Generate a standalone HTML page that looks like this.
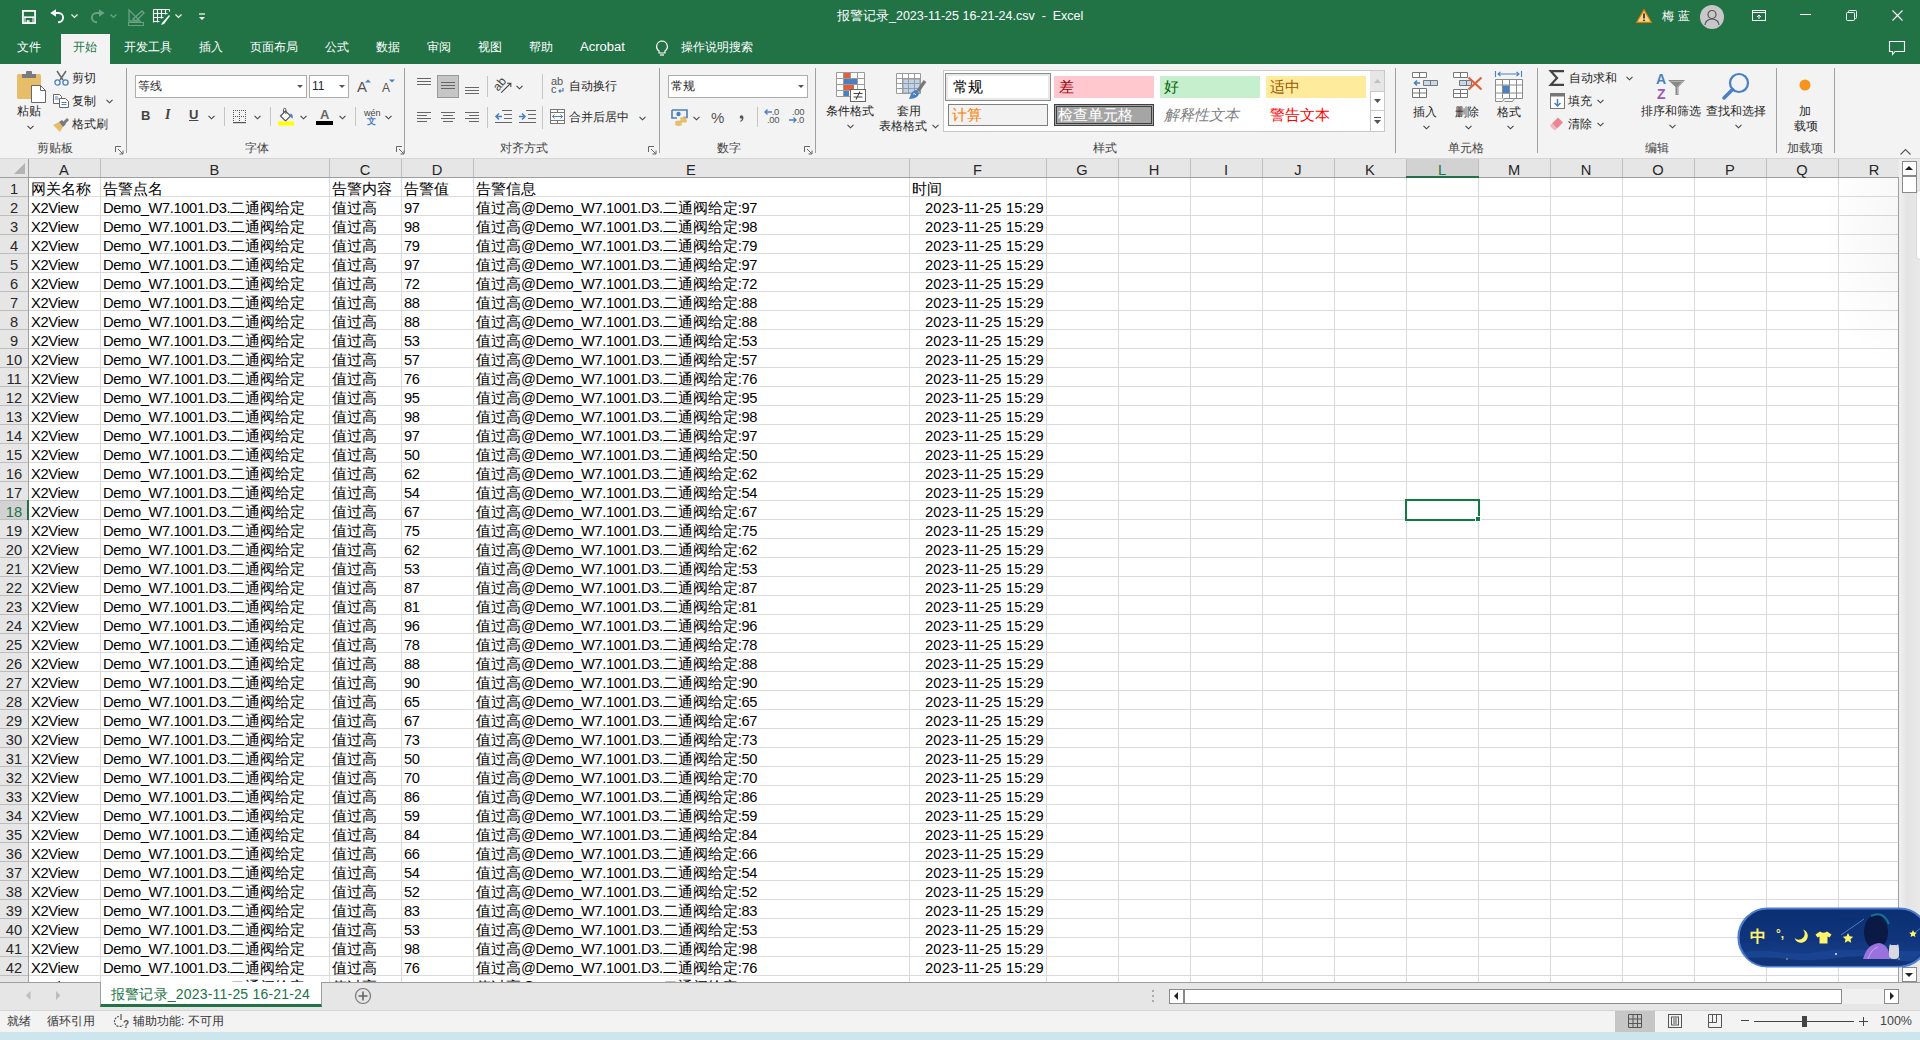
<!DOCTYPE html><html><head><meta charset="utf-8"><style>
*{box-sizing:border-box}
html,body{margin:0;padding:0}
body{width:1920px;height:1040px;overflow:hidden;position:relative;background:#fff;font-family:"Liberation Sans",sans-serif;color:#262626}
.a{position:absolute}
.t{position:absolute;white-space:pre;font-size:12px;line-height:14px}
svg{position:absolute;overflow:visible}
.vs{position:absolute;width:1px;background:#c6c6c6}
</style></head><body>

<div class="a" style="left:0;top:0;width:1920px;height:64px;background:#217346"></div>
<svg style="left:22px;top:10px" width="14" height="14" viewBox="0 0 14 14"><rect x="0.9" y="0.9" width="12.2" height="12.2" fill="none" stroke="#fff" stroke-width="1.8"/><path d="M2 7.2h10" stroke="#fff" stroke-width="1.6"/><path d="M3 8v5M11 8v5" stroke="#fff" stroke-width="1"/><path d="M5.3 13v-2.2h1.6V13" fill="none" stroke="#fff" stroke-width="1.2"/></svg>
<svg style="left:50px;top:9px" width="16" height="15" viewBox="0 0 16 15"><path d="M0.3 4L6 0.2v7.6z" fill="#fff"/><path d="M5 4h3.5a4.6 4.6 0 0 1 0 9.2H8" fill="none" stroke="#fff" stroke-width="1.9"/></svg>
<svg style="left:71px;top:14px" width="7" height="5"><path d="M0.5 0.5L3.5 3.5 6.5 0.5" fill="none" stroke="#fff" stroke-width="1.2"/></svg>
<svg style="left:89px;top:9px" width="16" height="15" viewBox="0 0 16 15"><path d="M15.7 4L10 0.2v7.6z" fill="#6aa383"/><path d="M11 4H7.5a4.6 4.6 0 0 0 0 9.2H8" fill="none" stroke="#6aa383" stroke-width="1.9"/></svg>
<svg style="left:110px;top:14px" width="7" height="5"><path d="M0.5 0.5L3.5 3.5 6.5 0.5" fill="none" stroke="#6aa383" stroke-width="1.2"/></svg>
<svg style="left:128px;top:9px" width="17" height="17" viewBox="0 0 17 17"><path d="M1 1v11h11z" fill="none" stroke="#6aa383" stroke-width="1.3"/><path d="M5 10L14 2l2 2-8 8z" fill="none" stroke="#6aa383" stroke-width="1.3"/><rect x="0.5" y="13.5" width="15" height="3" fill="none" stroke="#6aa383" stroke-width="1"/></svg>
<svg style="left:153px;top:9px" width="17" height="16" viewBox="0 0 17 16"><path d="M0.5 0.5h16M0.5 4.5h14M0.5 8.5h10M0.5 12.5h6M0.5 0.5v13M4.5 0.5v13M8.5 0.5v9M12.5 0.5v5M16.5 0.5v2" fill="none" stroke="#fff" stroke-width="1.1"/><path d="M9 14l7-8 1 1-6 8-3 1z" fill="#fff"/></svg>
<svg style="left:175px;top:14px" width="7" height="5"><path d="M0.5 0.5L3.5 3.5 6.5 0.5" fill="none" stroke="#fff" stroke-width="1.2"/></svg>
<svg style="left:199px;top:13px" width="6" height="8"><path d="M0 1h6" stroke="#fff" stroke-width="1.2"/><path d="M0 4h6L3 7z" fill="#fff"/></svg>
<div class="t" style="left:837px;top:9px;color:#fff;font-size:12.5px">报警记录_2023-11-25 16-21-24.csv  -  Excel</div>
<svg style="left:1636px;top:9px" width="16" height="14" viewBox="0 0 16 14"><path d="M8 0.8L15.3 13.3H0.7z" fill="#f7d38c" stroke="#e07b00" stroke-width="1.2"/><path d="M8 4.5v5" stroke="#222" stroke-width="1.6"/><circle cx="8" cy="11.3" r="0.9" fill="#222"/></svg>
<div class="t" style="left:1662px;top:9px;color:#fff;font-size:12px;letter-spacing:4px">梅蓝</div>
<svg style="left:1700px;top:5px" width="24" height="24" viewBox="0 0 24 24"><circle cx="12" cy="12" r="12" fill="#c8c8c8"/><circle cx="12" cy="9.5" r="4" fill="none" stroke="#555" stroke-width="1.2"/><path d="M5 20a7 6 0 0 1 14 0" fill="none" stroke="#555" stroke-width="1.2"/></svg>
<svg style="left:1752px;top:10px" width="14" height="11" viewBox="0 0 14 11"><rect x="0.5" y="0.5" width="13" height="10" fill="none" stroke="#fff" stroke-width="1"/><path d="M0.5 2.5h13" stroke="#fff"/><path d="M7 9V5M5 7l2-2 2 2" fill="none" stroke="#fff"/></svg>
<div class="a" style="left:1800px;top:14px;width:11px;height:1px;background:#fff"></div>
<svg style="left:1846px;top:10px" width="11" height="11" viewBox="0 0 11 11"><rect x="0.5" y="2.5" width="8" height="8" rx="1" fill="none" stroke="#fff"/><path d="M2.5 2.5v-1a1 1 0 0 1 1-1h6a1 1 0 0 1 1 1v6a1 1 0 0 1-1 1h-1" fill="none" stroke="#fff"/></svg>
<svg style="left:1892px;top:10px" width="11" height="11" viewBox="0 0 11 11"><path d="M0.5 0.5l10 10M10.5 0.5l-10 10" stroke="#fff" stroke-width="1.1"/></svg>
<div class="a" style="left:61px;top:34px;width:49px;height:30px;background:#f3f3f3"></div>
<div class="t" style="left:17px;top:40px;color:#fff">文件</div>
<div class="t" style="left:73px;top:40px;color:#217346">开始</div>
<div class="t" style="left:124px;top:40px;color:#fff">开发工具</div>
<div class="t" style="left:199px;top:40px;color:#fff">插入</div>
<div class="t" style="left:250px;top:40px;color:#fff">页面布局</div>
<div class="t" style="left:325px;top:40px;color:#fff">公式</div>
<div class="t" style="left:376px;top:40px;color:#fff">数据</div>
<div class="t" style="left:427px;top:40px;color:#fff">审阅</div>
<div class="t" style="left:478px;top:40px;color:#fff">视图</div>
<div class="t" style="left:529px;top:40px;color:#fff">帮助</div>
<div class="t" style="left:580px;top:40px;color:#fff"><span style="font-size:13px">Acrobat</span></div>
<div class="t" style="left:681px;top:40px;color:#fff">操作说明搜索</div>
<svg style="left:655px;top:40px" width="14" height="17" viewBox="0 0 14 17"><path d="M7 1a5.5 5.5 0 0 0-3 10v2h6v-2a5.5 5.5 0 0 0-3-10z" fill="none" stroke="#fff" stroke-width="1.2"/><path d="M5 15h4" stroke="#fff" stroke-width="1.2"/></svg>
<svg style="left:1889px;top:41px" width="16" height="15" viewBox="0 0 16 15"><path d="M0.5 0.5h15v10h-9.5l-2.5 3v-3h-3z" fill="none" stroke="#fff" stroke-width="1.1"/></svg>
<div class="a" style="left:0;top:64px;width:1920px;height:94px;background:#f3f3f3"></div>
<div class="a" style="left:0;top:158px;width:1920px;height:1px;background:#d5d5d5"></div>
<div class="vs" style="left:126px;top:68px;height:85px;background:#a0a0a0"></div>
<div class="vs" style="left:404px;top:68px;height:85px;background:#a0a0a0"></div>
<div class="vs" style="left:659px;top:68px;height:85px;background:#a0a0a0"></div>
<div class="vs" style="left:815px;top:68px;height:85px;background:#a0a0a0"></div>
<div class="vs" style="left:1395px;top:68px;height:85px;background:#a0a0a0"></div>
<div class="vs" style="left:1537px;top:68px;height:85px;background:#a0a0a0"></div>
<div class="vs" style="left:1776px;top:68px;height:85px;background:#a0a0a0"></div>
<div class="vs" style="left:1834px;top:68px;height:85px;background:#a0a0a0"></div>
<div class="t" style="left:37px;top:141px;color:#444">剪贴板</div>
<div class="t" style="left:245px;top:141px;color:#444">字体</div>
<div class="t" style="left:500px;top:141px;color:#444">对齐方式</div>
<div class="t" style="left:717px;top:141px;color:#444">数字</div>
<div class="t" style="left:1093px;top:141px;color:#444">样式</div>
<div class="t" style="left:1448px;top:141px;color:#444">单元格</div>
<div class="t" style="left:1645px;top:141px;color:#444">编辑</div>
<div class="t" style="left:1787px;top:141px;color:#444">加载项</div>
<svg style="left:115px;top:146px" width="9" height="9" viewBox="0 0 9 9"><path d="M0.5 6V0.5H6" fill="none" stroke="#666"/><path d="M3 3l5 5M8 4.5V8H4.5" fill="none" stroke="#666"/></svg>
<svg style="left:396px;top:146px" width="9" height="9" viewBox="0 0 9 9"><path d="M0.5 6V0.5H6" fill="none" stroke="#666"/><path d="M3 3l5 5M8 4.5V8H4.5" fill="none" stroke="#666"/></svg>
<svg style="left:648px;top:146px" width="9" height="9" viewBox="0 0 9 9"><path d="M0.5 6V0.5H6" fill="none" stroke="#666"/><path d="M3 3l5 5M8 4.5V8H4.5" fill="none" stroke="#666"/></svg>
<svg style="left:804px;top:146px" width="9" height="9" viewBox="0 0 9 9"><path d="M0.5 6V0.5H6" fill="none" stroke="#666"/><path d="M3 3l5 5M8 4.5V8H4.5" fill="none" stroke="#666"/></svg>
<svg style="left:17px;top:71px" width="30" height="32" viewBox="0 0 30 32"><rect x="0" y="3" width="24" height="25" rx="1.5" fill="#e8bd6a"/><rect x="5" y="3" width="14" height="4" fill="#7b7b7b"/><rect x="9" y="0" width="6" height="4" rx="1" fill="#7b7b7b"/><path d="M14.5 14.5h9l5 5v12h-14z" fill="#fff" stroke="#666"/><path d="M23.5 14.5v5h5" fill="none" stroke="#666"/></svg>
<div class="t" style="left:17px;top:104px;color:#262626">粘贴</div>
<svg style="left:27px;top:125px" width="7" height="5"><path d="M0.5 0.8L3.5 3.8 6.5 0.8" fill="none" stroke="#444" stroke-width="1.1"/></svg>
<svg style="left:54px;top:70px" width="15" height="16" viewBox="0 0 15 16"><path d="M3 1l6 9M12 1L6 10" stroke="#666" stroke-width="1.5"/><circle cx="3.5" cy="12.5" r="2.6" fill="none" stroke="#4a7fc1" stroke-width="1.3"/><circle cx="11.5" cy="12.5" r="2.6" fill="none" stroke="#4a7fc1" stroke-width="1.3"/></svg>
<div class="t" style="left:72px;top:71px">剪切</div>
<svg style="left:53px;top:94px" width="16" height="14" viewBox="0 0 16 14"><path d="M0.5 0.5h6l2 2v7h-8z" fill="#fff" stroke="#666"/><path d="M6.5 4.5h6l3 3v6h-9z" fill="#fff" stroke="#666"/><path d="M8.5 8.5h5M8.5 10.5h5M2 3h3M2 5h4" stroke="#4a7fc1"/></svg>
<div class="t" style="left:72px;top:94px">复制</div>
<svg style="left:106px;top:99px" width="7" height="5"><path d="M0.5 0.8L3.5 3.8 6.5 0.8" fill="none" stroke="#444" stroke-width="1.1"/></svg>
<svg style="left:53px;top:117px" width="17" height="15" viewBox="0 0 17 15"><path d="M0 8l6-3 4 5-3 5z" fill="#e8bd6a"/><path d="M6 5l4 5 3-3-4-4z" fill="#7b7b7b"/><path d="M10 5l4-4 2 2-4 4z" fill="#7b7b7b"/></svg>
<div class="t" style="left:72px;top:117px">格式刷</div>
<div class="a" style="left:135px;top:75px;width:172px;height:23px;background:#fff;border:1px solid #adadad"></div>
<div class="t" style="left:138px;top:79px">等线</div>
<svg style="left:297px;top:85px" width="7" height="4"><path d="M0 0h6L3 3z" fill="#555"/></svg>
<div class="a" style="left:309px;top:75px;width:40px;height:23px;background:#fff;border:1px solid #adadad"></div>
<div class="t" style="left:312px;top:79px">11</div>
<svg style="left:339px;top:85px" width="7" height="4"><path d="M0 0h6L3 3z" fill="#555"/></svg>
<div class="t" style="left:357px;top:80px;font-size:15px;color:#555">A</div><svg style="left:365px;top:79px" width="6" height="4"><path d="M0 3.5L3 0.5 6 3.5z" fill="#4a7fc1"/></svg>
<div class="t" style="left:382px;top:81px;font-size:12px;color:#555">A</div><svg style="left:389px;top:79px" width="6" height="4"><path d="M0 0.5h6L3 3.5z" fill="#4a7fc1"/></svg>
<div class="t" style="left:141px;top:109px;font-weight:bold;font-size:13px;color:#444">B</div>
<div class="t" style="left:165px;top:108px;font-style:italic;font-weight:bold;font-size:14px;color:#444;font-family:'Liberation Serif'">I</div>
<div class="t" style="left:189px;top:108px;font-size:13px;font-weight:bold;color:#444;text-decoration:underline">U</div>
<svg style="left:208px;top:115px" width="7" height="5"><path d="M0.5 0.8L3.5 3.8 6.5 0.8" fill="none" stroke="#444" stroke-width="1.1"/></svg>
<div class="vs" style="left:224px;top:107px;height:19px"></div>
<svg style="left:233px;top:110px" width="14" height="14" viewBox="0 0 14 14"><g fill="#555"><rect x="0" y="0" width="1" height="1"/><rect x="0" y="6" width="1" height="1"/><rect x="0" y="12" width="1" height="1"/><rect x="0" y="0" width="1" height="1"/><rect x="6" y="0" width="1" height="1"/><rect x="12" y="0" width="1" height="1"/><rect x="2" y="0" width="1" height="1"/><rect x="2" y="6" width="1" height="1"/><rect x="2" y="12" width="1" height="1"/><rect x="0" y="2" width="1" height="1"/><rect x="6" y="2" width="1" height="1"/><rect x="12" y="2" width="1" height="1"/><rect x="4" y="0" width="1" height="1"/><rect x="4" y="6" width="1" height="1"/><rect x="4" y="12" width="1" height="1"/><rect x="0" y="4" width="1" height="1"/><rect x="6" y="4" width="1" height="1"/><rect x="12" y="4" width="1" height="1"/><rect x="6" y="0" width="1" height="1"/><rect x="6" y="6" width="1" height="1"/><rect x="6" y="12" width="1" height="1"/><rect x="0" y="6" width="1" height="1"/><rect x="6" y="6" width="1" height="1"/><rect x="12" y="6" width="1" height="1"/><rect x="8" y="0" width="1" height="1"/><rect x="8" y="6" width="1" height="1"/><rect x="8" y="12" width="1" height="1"/><rect x="0" y="8" width="1" height="1"/><rect x="6" y="8" width="1" height="1"/><rect x="12" y="8" width="1" height="1"/><rect x="10" y="0" width="1" height="1"/><rect x="10" y="6" width="1" height="1"/><rect x="10" y="12" width="1" height="1"/><rect x="0" y="10" width="1" height="1"/><rect x="6" y="10" width="1" height="1"/><rect x="12" y="10" width="1" height="1"/><rect x="12" y="0" width="1" height="1"/><rect x="12" y="6" width="1" height="1"/><rect x="12" y="12" width="1" height="1"/><rect x="0" y="12" width="1" height="1"/><rect x="6" y="12" width="1" height="1"/><rect x="12" y="12" width="1" height="1"/></g><rect x="0" y="12" width="13" height="1.2" fill="#555"/></svg>
<svg style="left:254px;top:115px" width="7" height="5"><path d="M0.5 0.8L3.5 3.8 6.5 0.8" fill="none" stroke="#444" stroke-width="1.1"/></svg>
<div class="vs" style="left:270px;top:107px;height:19px"></div>
<svg style="left:278px;top:108px" width="18" height="18" viewBox="0 0 18 18"><path d="M2.5 8l5-5 5 5-5 5z" fill="#fff" stroke="#555" stroke-width="1.1"/><path d="M5.5 5V1.5a1.2 1.2 0 0 1 2.4 0V6" fill="none" stroke="#555" stroke-width="1"/><path d="M12.5 5.5q3 0.5 2 5.5-1.5-2-2.5-3z" fill="#4a7fc1"/><rect x="0" y="13.5" width="16" height="4" fill="#ffff00"/></svg>
<svg style="left:300px;top:115px" width="7" height="5"><path d="M0.5 0.8L3.5 3.8 6.5 0.8" fill="none" stroke="#444" stroke-width="1.1"/></svg>
<div class="t" style="left:320px;top:108px;font-size:13px;line-height:14px;font-weight:bold;color:#666">A</div><div class="a" style="left:316px;top:121px;width:17px;height:4px;background:#000"></div>
<svg style="left:339px;top:115px" width="7" height="5"><path d="M0.5 0.8L3.5 3.8 6.5 0.8" fill="none" stroke="#444" stroke-width="1.1"/></svg>
<div class="vs" style="left:355px;top:107px;height:19px"></div>
<div class="t" style="left:364px;top:109px;font-size:9px;line-height:9px;color:#444">wén</div><div class="t" style="left:367px;top:116px;font-size:9px;line-height:10px;font-weight:bold;color:#4a7fc1">文</div>
<svg style="left:385px;top:115px" width="7" height="5"><path d="M0.5 0.8L3.5 3.8 6.5 0.8" fill="none" stroke="#444" stroke-width="1.1"/></svg>
<div class="a" style="left:417px;top:78px;width:14px;height:1px;background:#666"></div><div class="a" style="left:417px;top:81px;width:14px;height:1px;background:#666"></div><div class="a" style="left:417px;top:84px;width:14px;height:1px;background:#666"></div>
<div class="a" style="left:437px;top:75px;width:22px;height:23px;background:#c6c6c6;border:1px solid #9a9a9a"></div>
<div class="a" style="left:441px;top:82px;width:14px;height:1px;background:#666"></div><div class="a" style="left:441px;top:85px;width:14px;height:1px;background:#666"></div><div class="a" style="left:441px;top:88px;width:14px;height:1px;background:#666"></div>
<div class="a" style="left:465px;top:87px;width:14px;height:1px;background:#666"></div><div class="a" style="left:465px;top:90px;width:14px;height:1px;background:#666"></div><div class="a" style="left:465px;top:93px;width:14px;height:1px;background:#666"></div>
<div class="vs" style="left:487px;top:76px;height:21px"></div>
<svg style="left:495px;top:77px" width="18" height="17" viewBox="0 0 18 17"><g transform="translate(4.3 6.8) rotate(-50)"><text x="0" y="4.3" text-anchor="middle" font-size="12" fill="#444" font-family="Liberation Sans">ab</text></g><path d="M6.2 15.7L15.3 6.7M12 6.2h3.8V10" fill="none" stroke="#444" stroke-width="1.1"/></svg>
<svg style="left:516px;top:85px" width="7" height="5"><path d="M0.5 0.8L3.5 3.8 6.5 0.8" fill="none" stroke="#444" stroke-width="1.1"/></svg>
<div class="vs" style="left:542px;top:74px;height:25px"></div>
<div class="t" style="left:551px;top:77px;font-size:11px;line-height:8px;color:#555">ab<br>c</div><svg style="left:558px;top:88px" width="6" height="5"><path d="M5 0v3H1M2.5 1.5L1 3l1.5 1.5" fill="none" stroke="#4a7fc1" stroke-width="1.2"/></svg>
<div class="t" style="left:569px;top:79px">自动换行</div>
<div class="a" style="left:417px;top:112px;width:14px;height:1px;background:#666"></div><div class="a" style="left:417px;top:115px;width:10px;height:1px;background:#666"></div><div class="a" style="left:417px;top:118px;width:14px;height:1px;background:#666"></div><div class="a" style="left:417px;top:121px;width:10px;height:1px;background:#666"></div>
<div class="a" style="left:441px;top:112px;width:14px;height:1px;background:#666"></div><div class="a" style="left:443px;top:115px;width:10px;height:1px;background:#666"></div><div class="a" style="left:441px;top:118px;width:14px;height:1px;background:#666"></div><div class="a" style="left:443px;top:121px;width:10px;height:1px;background:#666"></div>
<div class="a" style="left:465px;top:112px;width:14px;height:1px;background:#666"></div><div class="a" style="left:469px;top:115px;width:10px;height:1px;background:#666"></div><div class="a" style="left:465px;top:118px;width:14px;height:1px;background:#666"></div><div class="a" style="left:469px;top:121px;width:10px;height:1px;background:#666"></div>
<div class="vs" style="left:487px;top:107px;height:21px"></div>
<svg style="left:495px;top:110px" width="17" height="13" viewBox="0 0 17 13"><path d="M7 0.5h10M9 4.5h8M9 8.5h8M0 12.5h17" stroke="#666"/><path d="M1 6.5h6M4 3.5L1 6.5l3 3" fill="none" stroke="#4a7fc1" stroke-width="1.5"/></svg>
<svg style="left:519px;top:110px" width="17" height="13" viewBox="0 0 17 13"><path d="M7 0.5h10M9 4.5h8M9 8.5h8M0 12.5h17" stroke="#666"/><path d="M0 6.5h6M3 3.5l3 3-3 3" fill="none" stroke="#4a7fc1" stroke-width="1.5"/></svg>
<div class="vs" style="left:542px;top:106px;height:23px"></div>
<svg style="left:550px;top:109px" width="16" height="16" viewBox="0 0 16 16"><rect x="0.5" y="0.5" width="14" height="14" fill="#fff" stroke="#777"/><path d="M0.5 3.5h14M0.5 11.5h14M7.5 0.5v3M7.5 11.5v3" stroke="#777"/><path d="M2.5 7.5h10M4.5 5.5l-2 2 2 2M10.5 5.5l2 2-2 2" fill="none" stroke="#4a7fc1"/></svg>
<div class="t" style="left:569px;top:110px">合并后居中</div>
<svg style="left:639px;top:116px" width="7" height="5"><path d="M0.5 0.8L3.5 3.8 6.5 0.8" fill="none" stroke="#444" stroke-width="1.1"/></svg>
<div class="a" style="left:668px;top:75px;width:140px;height:23px;background:#fff;border:1px solid #adadad"></div>
<div class="t" style="left:671px;top:79px">常规</div>
<svg style="left:798px;top:85px" width="7" height="4"><path d="M0 0h6L3 3z" fill="#555"/></svg>
<svg style="left:671px;top:109px" width="17" height="17" viewBox="0 0 17 17"><path d="M1 1h15v7.5h-4M1 1v8h5" fill="none" stroke="#4a7fc1" stroke-width="1.6"/><circle cx="7.5" cy="5" r="2.2" fill="#4a7fc1"/><ellipse cx="12.5" cy="9.5" rx="3.5" ry="1.5" fill="#e8bd6a"/><ellipse cx="12.5" cy="12" rx="3.5" ry="1.5" fill="#e8bd6a"/><ellipse cx="7.5" cy="13" rx="3.5" ry="1.5" fill="#e8bd6a"/><ellipse cx="7.5" cy="15.5" rx="3.5" ry="1.4" fill="#e8bd6a"/></svg>
<svg style="left:693px;top:116px" width="7" height="5"><path d="M0.5 0.8L3.5 3.8 6.5 0.8" fill="none" stroke="#444" stroke-width="1.1"/></svg>
<div class="t" style="left:711px;top:110px;font-size:15px;line-height:15px;color:#555">%</div>
<svg style="left:739px;top:115px" width="5" height="7" viewBox="0 0 5 7"><circle cx="2.5" cy="2" r="1.8" fill="#555"/><path d="M4 2.5Q4 5 1.5 6.5" fill="none" stroke="#555" stroke-width="1.3"/></svg>
<div class="vs" style="left:757px;top:107px;height:20px"></div>
<div class="t" style="left:767px;top:108px;font-size:9.5px;line-height:8px;color:#555;letter-spacing:-0.3px">  .0<br>.00</div><svg style="left:764px;top:109px" width="8" height="6"><path d="M8 3H1M3.5 0.5L1 3l2.5 2.5" fill="none" stroke="#4a7fc1" stroke-width="1.3"/></svg>
<div class="t" style="left:792px;top:108px;font-size:9.5px;line-height:8px;color:#555;letter-spacing:-0.3px">.00<br>  .0</div><svg style="left:789px;top:117px" width="8" height="6"><path d="M0 3h7M4.5 0.5L7 3 4.5 5.5" fill="none" stroke="#4a7fc1" stroke-width="1.3"/></svg>
<svg style="left:836px;top:72px" width="31" height="31" viewBox="0 0 31 31"><path d="M0.5 0.5h28v24h-28zM0.5 6.5h28M0.5 12.5h28M0.5 18.5h28M7.5 0.5v24M14.5 0.5v24M21.5 0.5v24" fill="#fff" stroke="#9a9a9a"/><rect x="8" y="1" width="6" height="5" fill="#e0603a"/><rect x="8" y="7" width="13" height="5" fill="#4a7fc1"/><rect x="8" y="13" width="10" height="5" fill="#e0603a"/><rect x="8" y="19" width="5" height="5" fill="#4a7fc1"/><rect x="14.5" y="17.5" width="15" height="12" fill="#fff" stroke="#666"/><path d="M17.5 21.5h9M17.5 25h9M24 19.5l-4 8" fill="none" stroke="#444" stroke-width="1.1"/></svg>
<div class="t" style="left:826px;top:104px">条件格式</div>
<svg style="left:847px;top:124px" width="7" height="5"><path d="M0.5 0.8L3.5 3.8 6.5 0.8" fill="none" stroke="#444" stroke-width="1.1"/></svg>
<svg style="left:896px;top:73px" width="30" height="29" viewBox="0 0 30 29"><path d="M0.5 0.5h24v20h-24zM0.5 5.5h24M0.5 10.5h24M0.5 15.5h24M6.5 0.5v20M12.5 0.5v20M18.5 0.5v20" fill="#fff" stroke="#9a9a9a"/><rect x="7" y="6" width="17" height="14" fill="#bcd3ee"/><path d="M7 6h17v14H7z M7 10.5h17M7 15.5h17M12.5 6v14M18.5 6v14" fill="none" stroke="#9a9a9a"/><path d="M29 8l-7 10" stroke="#777" stroke-width="3.2"/><path d="M21 17q-4 0-6 4l-2 5q6 0 9-3 2-3-1-6z" fill="#4a7fc1"/><path d="M17 21q2-1 3 1" fill="none" stroke="#fff" stroke-width="0.8"/></svg>
<div class="t" style="left:897px;top:104px">套用</div>
<div class="t" style="left:879px;top:119px">表格格式</div>
<svg style="left:932px;top:124px" width="7" height="5"><path d="M0.5 0.8L3.5 3.8 6.5 0.8" fill="none" stroke="#444" stroke-width="1.1"/></svg>
<div class="a" style="left:943px;top:70px;width:442px;height:62px;background:#fff;border:1px solid #c8c8c8"></div>
<div class="a" style="left:945px;top:73px;width:106px;height:28px;border:1px solid #8a8a8a;background:#fff;box-shadow:inset 0 0 0 2px #e8e8e8"></div>
<div class="t" style="left:953px;top:79px;font-size:15px;line-height:16px;color:#000">常规</div>
<div class="a" style="left:1054px;top:76px;width:100px;height:22px;background:#ffc7ce"></div><div class="t" style="left:1059px;top:79px;font-size:15px;line-height:16px;color:#9c0006">差</div>
<div class="a" style="left:1160px;top:76px;width:100px;height:22px;background:#c6efce"></div><div class="t" style="left:1164px;top:79px;font-size:15px;line-height:16px;color:#006100">好</div>
<div class="a" style="left:1266px;top:76px;width:100px;height:22px;background:#ffeb9c"></div><div class="t" style="left:1270px;top:79px;font-size:15px;line-height:16px;color:#9c5700">适中</div>
<div class="a" style="left:948px;top:104px;width:100px;height:22px;background:#f2f2f2;border:1px solid #7f7f7f"></div><div class="t" style="left:952px;top:107px;font-size:15px;line-height:16px;color:#fa7d00">计算</div>
<div class="a" style="left:1054px;top:104px;width:100px;height:22px;background:#a5a5a5;border:3px double #3f3f3f"></div><div class="t" style="left:1058px;top:107px;font-size:15px;line-height:16px;color:#fff">检查单元格</div>
<div class="t" style="left:1164px;top:107px;font-size:15px;line-height:16px;color:#7f7f7f;font-style:italic">解释性文本</div>
<div class="t" style="left:1270px;top:107px;font-size:15px;line-height:16px;color:#ff0000">警告文本</div>
<div class="a" style="left:1370px;top:71px;width:14px;height:60px;background:#fff;border-left:1px solid #c8c8c8"></div>
<div class="a" style="left:1370px;top:71px;width:14px;height:20px;background:#e6e6e6"></div>
<svg style="left:1374px;top:79px" width="7" height="4"><path d="M0 4L3.5 0 7 4z" fill="#c0c0c0"/></svg>
<div class="a" style="left:1370px;top:91px;width:14px;height:1px;background:#c8c8c8"></div>
<svg style="left:1374px;top:99px" width="7" height="4"><path d="M0 0h7L3.5 4z" fill="#555"/></svg>
<div class="a" style="left:1370px;top:110px;width:14px;height:1px;background:#c8c8c8"></div>
<svg style="left:1374px;top:117px" width="7" height="8"><path d="M0 0.5h7" stroke="#555"/><path d="M0 3h7L3.5 7z" fill="#555"/></svg>
<svg style="left:1412px;top:72px" width="27" height="29" viewBox="0 0 27 29"><path d="M0.5 0.5h14v5h-14zM7.5 0.5v5" fill="#fff" stroke="#777"/><path d="M11.5 8.5h14v5h-14zM18.5 8.5v5" fill="#c5d9ef" stroke="#777"/><path d="M8 11H2.5M5 8.5L2.5 11 5 13.5" fill="none" stroke="#4a7fc1" stroke-width="1.6"/><path d="M0.5 16.5h14v9h-14zM7.5 16.5v9M0.5 21h14" fill="#fff" stroke="#777"/></svg>
<div class="t" style="left:1413px;top:105px">插入</div>
<svg style="left:1423px;top:125px" width="7" height="5"><path d="M0.5 0.8L3.5 3.8 6.5 0.8" fill="none" stroke="#444" stroke-width="1.1"/></svg>
<svg style="left:1453px;top:72px" width="30" height="29" viewBox="0 0 30 29"><path d="M0.5 0.5h14v5h-14zM7.5 0.5v5" fill="#fff" stroke="#777"/><path d="M6.5 8.5h12v5h-12zM13.5 8.5v5" fill="#c5d9ef" stroke="#777"/><path d="M0.5 17.5h14v8h-14zM7.5 17.5v8M0.5 21.5h14" fill="#fff" stroke="#777"/><path d="M15.5 5.5l13 12M28.5 5.5l-13 12" stroke="#e0603a" stroke-width="2.2"/></svg>
<div class="t" style="left:1455px;top:105px">删除</div>
<svg style="left:1465px;top:125px" width="7" height="5"><path d="M0.5 0.8L3.5 3.8 6.5 0.8" fill="none" stroke="#444" stroke-width="1.1"/></svg>
<svg style="left:1495px;top:71px" width="29" height="32" viewBox="0 0 29 32"><path d="M3 3h21M5.5 0.8L3 3l2.5 2.2M21.5 0.8L24 3l-2.5 2.2M0.5 0v6M26.5 0v6" fill="none" stroke="#4a7fc1" stroke-width="1.1"/><path d="M0.5 8.5h27v19h-27zM0.5 14h27M0.5 22h27M7.5 8.5v19M14.5 8.5v19M21.5 8.5v19" fill="#fff" stroke="#8a8a8a"/><path d="M0.5 27.5v3h7l2-3M9.5 30.5h8l2-3" fill="#fff" stroke="#8a8a8a"/><rect x="8" y="14.5" width="6" height="8" fill="#4a7fc1"/></svg>
<div class="t" style="left:1497px;top:105px">格式</div>
<svg style="left:1507px;top:125px" width="7" height="5"><path d="M0.5 0.8L3.5 3.8 6.5 0.8" fill="none" stroke="#444" stroke-width="1.1"/></svg>
<svg style="left:1549px;top:70px" width="16" height="16" viewBox="0 0 16 16"><path d="M15 1.2H1.8l6.2 6.8-6.2 6.8H15" fill="none" stroke="#444" stroke-width="2.2"/></svg>
<div class="t" style="left:1569px;top:71px">自动求和</div>
<svg style="left:1626px;top:76px" width="7" height="5"><path d="M0.5 0.8L3.5 3.8 6.5 0.8" fill="none" stroke="#444" stroke-width="1.1"/></svg>
<svg style="left:1550px;top:93px" width="15" height="16" viewBox="0 0 15 16"><rect x="0.5" y="0.5" width="14" height="15" fill="#fff" stroke="#777"/><rect x="0.5" y="0.5" width="14" height="3" fill="#777"/><path d="M7.5 6v7M4.5 10l3 3 3-3" fill="none" stroke="#4a7fc1" stroke-width="1.5"/></svg>
<div class="t" style="left:1568px;top:94px">填充</div>
<svg style="left:1597px;top:99px" width="7" height="5"><path d="M0.5 0.8L3.5 3.8 6.5 0.8" fill="none" stroke="#444" stroke-width="1.1"/></svg>
<svg style="left:1550px;top:117px" width="14" height="14" viewBox="0 0 14 14"><path d="M8 0.5l5 5-6 6-5-5z" fill="#e98595"/><path d="M2 6.5l5 5-1.5 1.5a1 1 0 0 1-1.4 0L0.5 9.4a1 1 0 0 1 0-1.4z" fill="#f3b6bf"/></svg>
<div class="t" style="left:1568px;top:117px">清除</div>
<svg style="left:1597px;top:122px" width="7" height="5"><path d="M0.5 0.8L3.5 3.8 6.5 0.8" fill="none" stroke="#444" stroke-width="1.1"/></svg>
<svg style="left:1656px;top:72px" width="32" height="28" viewBox="0 0 32 28"><text x="0" y="12" font-size="14" font-weight="bold" fill="#4a7fc1" font-family="Liberation Sans">A</text><text x="1" y="27" font-size="14" font-weight="bold" fill="#9b59b6" font-family="Liberation Sans">Z</text><path d="M12 8h17l-6.5 7v8h-3v-8z" fill="#888"/><path d="M14.5 9.5h12l-5 5.5v7" fill="none" stroke="#bbb" stroke-width="0.8"/></svg>
<div class="t" style="left:1641px;top:104px">排序和筛选</div>
<svg style="left:1669px;top:124px" width="7" height="5"><path d="M0.5 0.8L3.5 3.8 6.5 0.8" fill="none" stroke="#444" stroke-width="1.1"/></svg>
<svg style="left:1722px;top:72px" width="28" height="28" viewBox="0 0 28 28"><circle cx="17" cy="11" r="9" fill="none" stroke="#4a7fc1" stroke-width="2.2"/><path d="M10.5 17.5L2 26" stroke="#4a7fc1" stroke-width="3.5" stroke-linecap="round"/></svg>
<div class="t" style="left:1706px;top:104px">查找和选择</div>
<svg style="left:1735px;top:124px" width="7" height="5"><path d="M0.5 0.8L3.5 3.8 6.5 0.8" fill="none" stroke="#444" stroke-width="1.1"/></svg>
<svg style="left:1799px;top:79px" width="12" height="12"><circle cx="6" cy="6" r="5.5" fill="#f7941d"/></svg>
<div class="t" style="left:1799px;top:104px">加</div>
<div class="t" style="left:1794px;top:119px">载项</div>
<svg style="left:1900px;top:149px" width="11" height="6"><path d="M0.5 5.5L5.5 0.5 10.5 5.5" fill="none" stroke="#555" stroke-width="1.1"/></svg>
<div class="a" style="left:0;top:159px;width:1920px;height:823px;background:#fff"></div>
<div class="a" style="left:0;top:159px;width:1900px;height:18px;background:#e6e6e6"></div>
<div class="a" style="left:0;top:178px;width:28px;height:804px;background:#e6e6e6"></div>
<div class="a" style="left:1407px;top:159px;width:71px;height:18px;background:#d2d2d2"></div>
<div class="a" style="left:0;top:501px;width:28px;height:18px;background:#d2d2d2"></div>
<svg style="left:14px;top:163px" width="12" height="12"><path d="M11 0V11H0z" fill="#b4b4b4"/></svg>
<div class="a" style="left:100px;top:159px;width:1px;height:18px;background:#bdbdbd"></div>
<div class="a" style="left:329px;top:159px;width:1px;height:18px;background:#bdbdbd"></div>
<div class="a" style="left:401px;top:159px;width:1px;height:18px;background:#bdbdbd"></div>
<div class="a" style="left:473px;top:159px;width:1px;height:18px;background:#bdbdbd"></div>
<div class="a" style="left:909px;top:159px;width:1px;height:18px;background:#bdbdbd"></div>
<div class="a" style="left:1046px;top:159px;width:1px;height:18px;background:#bdbdbd"></div>
<div class="a" style="left:1118px;top:159px;width:1px;height:18px;background:#bdbdbd"></div>
<div class="a" style="left:1190px;top:159px;width:1px;height:18px;background:#bdbdbd"></div>
<div class="a" style="left:1262px;top:159px;width:1px;height:18px;background:#bdbdbd"></div>
<div class="a" style="left:1334px;top:159px;width:1px;height:18px;background:#bdbdbd"></div>
<div class="a" style="left:1406px;top:159px;width:1px;height:18px;background:#bdbdbd"></div>
<div class="a" style="left:1478px;top:159px;width:1px;height:18px;background:#bdbdbd"></div>
<div class="a" style="left:1550px;top:159px;width:1px;height:18px;background:#bdbdbd"></div>
<div class="a" style="left:1622px;top:159px;width:1px;height:18px;background:#bdbdbd"></div>
<div class="a" style="left:1694px;top:159px;width:1px;height:18px;background:#bdbdbd"></div>
<div class="a" style="left:1766px;top:159px;width:1px;height:18px;background:#bdbdbd"></div>
<div class="a" style="left:1838px;top:159px;width:1px;height:18px;background:#bdbdbd"></div>
<div class="a" style="left:100px;top:178px;width:1px;height:804px;background:#dadada"></div>
<div class="a" style="left:329px;top:178px;width:1px;height:804px;background:#dadada"></div>
<div class="a" style="left:401px;top:178px;width:1px;height:804px;background:#dadada"></div>
<div class="a" style="left:473px;top:178px;width:1px;height:804px;background:#dadada"></div>
<div class="a" style="left:909px;top:178px;width:1px;height:804px;background:#dadada"></div>
<div class="a" style="left:1046px;top:178px;width:1px;height:804px;background:#dadada"></div>
<div class="a" style="left:1118px;top:178px;width:1px;height:804px;background:#dadada"></div>
<div class="a" style="left:1190px;top:178px;width:1px;height:804px;background:#dadada"></div>
<div class="a" style="left:1262px;top:178px;width:1px;height:804px;background:#dadada"></div>
<div class="a" style="left:1334px;top:178px;width:1px;height:804px;background:#dadada"></div>
<div class="a" style="left:1406px;top:178px;width:1px;height:804px;background:#dadada"></div>
<div class="a" style="left:1478px;top:178px;width:1px;height:804px;background:#dadada"></div>
<div class="a" style="left:1550px;top:178px;width:1px;height:804px;background:#dadada"></div>
<div class="a" style="left:1622px;top:178px;width:1px;height:804px;background:#dadada"></div>
<div class="a" style="left:1694px;top:178px;width:1px;height:804px;background:#dadada"></div>
<div class="a" style="left:1766px;top:178px;width:1px;height:804px;background:#dadada"></div>
<div class="a" style="left:1838px;top:178px;width:1px;height:804px;background:#dadada"></div>
<div class="a" style="left:0;top:196px;width:28px;height:1px;background:#bdbdbd"></div><div class="a" style="left:29px;top:196px;width:1869px;height:1px;background:#dadada"></div><div class="a" style="left:0;top:215px;width:28px;height:1px;background:#bdbdbd"></div><div class="a" style="left:29px;top:215px;width:1869px;height:1px;background:#dadada"></div><div class="a" style="left:0;top:234px;width:28px;height:1px;background:#bdbdbd"></div><div class="a" style="left:29px;top:234px;width:1869px;height:1px;background:#dadada"></div><div class="a" style="left:0;top:253px;width:28px;height:1px;background:#bdbdbd"></div><div class="a" style="left:29px;top:253px;width:1869px;height:1px;background:#dadada"></div><div class="a" style="left:0;top:272px;width:28px;height:1px;background:#bdbdbd"></div><div class="a" style="left:29px;top:272px;width:1869px;height:1px;background:#dadada"></div><div class="a" style="left:0;top:291px;width:28px;height:1px;background:#bdbdbd"></div><div class="a" style="left:29px;top:291px;width:1869px;height:1px;background:#dadada"></div><div class="a" style="left:0;top:310px;width:28px;height:1px;background:#bdbdbd"></div><div class="a" style="left:29px;top:310px;width:1869px;height:1px;background:#dadada"></div><div class="a" style="left:0;top:329px;width:28px;height:1px;background:#bdbdbd"></div><div class="a" style="left:29px;top:329px;width:1869px;height:1px;background:#dadada"></div><div class="a" style="left:0;top:348px;width:28px;height:1px;background:#bdbdbd"></div><div class="a" style="left:29px;top:348px;width:1869px;height:1px;background:#dadada"></div><div class="a" style="left:0;top:367px;width:28px;height:1px;background:#bdbdbd"></div><div class="a" style="left:29px;top:367px;width:1869px;height:1px;background:#dadada"></div><div class="a" style="left:0;top:386px;width:28px;height:1px;background:#bdbdbd"></div><div class="a" style="left:29px;top:386px;width:1869px;height:1px;background:#dadada"></div><div class="a" style="left:0;top:405px;width:28px;height:1px;background:#bdbdbd"></div><div class="a" style="left:29px;top:405px;width:1869px;height:1px;background:#dadada"></div><div class="a" style="left:0;top:424px;width:28px;height:1px;background:#bdbdbd"></div><div class="a" style="left:29px;top:424px;width:1869px;height:1px;background:#dadada"></div><div class="a" style="left:0;top:443px;width:28px;height:1px;background:#bdbdbd"></div><div class="a" style="left:29px;top:443px;width:1869px;height:1px;background:#dadada"></div><div class="a" style="left:0;top:462px;width:28px;height:1px;background:#bdbdbd"></div><div class="a" style="left:29px;top:462px;width:1869px;height:1px;background:#dadada"></div><div class="a" style="left:0;top:481px;width:28px;height:1px;background:#bdbdbd"></div><div class="a" style="left:29px;top:481px;width:1869px;height:1px;background:#dadada"></div><div class="a" style="left:0;top:500px;width:28px;height:1px;background:#bdbdbd"></div><div class="a" style="left:29px;top:500px;width:1869px;height:1px;background:#dadada"></div><div class="a" style="left:0;top:519px;width:28px;height:1px;background:#bdbdbd"></div><div class="a" style="left:29px;top:519px;width:1869px;height:1px;background:#dadada"></div><div class="a" style="left:0;top:538px;width:28px;height:1px;background:#bdbdbd"></div><div class="a" style="left:29px;top:538px;width:1869px;height:1px;background:#dadada"></div><div class="a" style="left:0;top:557px;width:28px;height:1px;background:#bdbdbd"></div><div class="a" style="left:29px;top:557px;width:1869px;height:1px;background:#dadada"></div><div class="a" style="left:0;top:576px;width:28px;height:1px;background:#bdbdbd"></div><div class="a" style="left:29px;top:576px;width:1869px;height:1px;background:#dadada"></div><div class="a" style="left:0;top:595px;width:28px;height:1px;background:#bdbdbd"></div><div class="a" style="left:29px;top:595px;width:1869px;height:1px;background:#dadada"></div><div class="a" style="left:0;top:614px;width:28px;height:1px;background:#bdbdbd"></div><div class="a" style="left:29px;top:614px;width:1869px;height:1px;background:#dadada"></div><div class="a" style="left:0;top:633px;width:28px;height:1px;background:#bdbdbd"></div><div class="a" style="left:29px;top:633px;width:1869px;height:1px;background:#dadada"></div><div class="a" style="left:0;top:652px;width:28px;height:1px;background:#bdbdbd"></div><div class="a" style="left:29px;top:652px;width:1869px;height:1px;background:#dadada"></div><div class="a" style="left:0;top:671px;width:28px;height:1px;background:#bdbdbd"></div><div class="a" style="left:29px;top:671px;width:1869px;height:1px;background:#dadada"></div><div class="a" style="left:0;top:690px;width:28px;height:1px;background:#bdbdbd"></div><div class="a" style="left:29px;top:690px;width:1869px;height:1px;background:#dadada"></div><div class="a" style="left:0;top:709px;width:28px;height:1px;background:#bdbdbd"></div><div class="a" style="left:29px;top:709px;width:1869px;height:1px;background:#dadada"></div><div class="a" style="left:0;top:728px;width:28px;height:1px;background:#bdbdbd"></div><div class="a" style="left:29px;top:728px;width:1869px;height:1px;background:#dadada"></div><div class="a" style="left:0;top:747px;width:28px;height:1px;background:#bdbdbd"></div><div class="a" style="left:29px;top:747px;width:1869px;height:1px;background:#dadada"></div><div class="a" style="left:0;top:766px;width:28px;height:1px;background:#bdbdbd"></div><div class="a" style="left:29px;top:766px;width:1869px;height:1px;background:#dadada"></div><div class="a" style="left:0;top:785px;width:28px;height:1px;background:#bdbdbd"></div><div class="a" style="left:29px;top:785px;width:1869px;height:1px;background:#dadada"></div><div class="a" style="left:0;top:804px;width:28px;height:1px;background:#bdbdbd"></div><div class="a" style="left:29px;top:804px;width:1869px;height:1px;background:#dadada"></div><div class="a" style="left:0;top:823px;width:28px;height:1px;background:#bdbdbd"></div><div class="a" style="left:29px;top:823px;width:1869px;height:1px;background:#dadada"></div><div class="a" style="left:0;top:842px;width:28px;height:1px;background:#bdbdbd"></div><div class="a" style="left:29px;top:842px;width:1869px;height:1px;background:#dadada"></div><div class="a" style="left:0;top:861px;width:28px;height:1px;background:#bdbdbd"></div><div class="a" style="left:29px;top:861px;width:1869px;height:1px;background:#dadada"></div><div class="a" style="left:0;top:880px;width:28px;height:1px;background:#bdbdbd"></div><div class="a" style="left:29px;top:880px;width:1869px;height:1px;background:#dadada"></div><div class="a" style="left:0;top:899px;width:28px;height:1px;background:#bdbdbd"></div><div class="a" style="left:29px;top:899px;width:1869px;height:1px;background:#dadada"></div><div class="a" style="left:0;top:918px;width:28px;height:1px;background:#bdbdbd"></div><div class="a" style="left:29px;top:918px;width:1869px;height:1px;background:#dadada"></div><div class="a" style="left:0;top:937px;width:28px;height:1px;background:#bdbdbd"></div><div class="a" style="left:29px;top:937px;width:1869px;height:1px;background:#dadada"></div><div class="a" style="left:0;top:956px;width:28px;height:1px;background:#bdbdbd"></div><div class="a" style="left:29px;top:956px;width:1869px;height:1px;background:#dadada"></div><div class="a" style="left:0;top:975px;width:28px;height:1px;background:#bdbdbd"></div><div class="a" style="left:29px;top:975px;width:1869px;height:1px;background:#dadada"></div>
<div class="a" style="left:0;top:177px;width:1898px;height:1px;background:#9e9e9e"></div>
<div class="a" style="left:28px;top:159px;width:1px;height:823px;background:#9e9e9e"></div>
<div class="a" style="left:1898px;top:177px;width:1px;height:805px;background:#9e9e9e"></div>
<div class="a" style="left:1406px;top:176px;width:73px;height:2px;background:#217346"></div>
<div class="a" style="left:27px;top:500px;width:2px;height:20px;background:#217346"></div>
<div class="t" style="left:28px;top:162px;width:72px;text-align:center;font-size:14.67px;line-height:16px;color:#262626">A</div>
<div class="t" style="left:100px;top:162px;width:229px;text-align:center;font-size:14.67px;line-height:16px;color:#262626">B</div>
<div class="t" style="left:329px;top:162px;width:72px;text-align:center;font-size:14.67px;line-height:16px;color:#262626">C</div>
<div class="t" style="left:401px;top:162px;width:72px;text-align:center;font-size:14.67px;line-height:16px;color:#262626">D</div>
<div class="t" style="left:473px;top:162px;width:436px;text-align:center;font-size:14.67px;line-height:16px;color:#262626">E</div>
<div class="t" style="left:909px;top:162px;width:137px;text-align:center;font-size:14.67px;line-height:16px;color:#262626">F</div>
<div class="t" style="left:1046px;top:162px;width:72px;text-align:center;font-size:14.67px;line-height:16px;color:#262626">G</div>
<div class="t" style="left:1118px;top:162px;width:72px;text-align:center;font-size:14.67px;line-height:16px;color:#262626">H</div>
<div class="t" style="left:1190px;top:162px;width:72px;text-align:center;font-size:14.67px;line-height:16px;color:#262626">I</div>
<div class="t" style="left:1262px;top:162px;width:72px;text-align:center;font-size:14.67px;line-height:16px;color:#262626">J</div>
<div class="t" style="left:1334px;top:162px;width:72px;text-align:center;font-size:14.67px;line-height:16px;color:#262626">K</div>
<div class="t" style="left:1406px;top:162px;width:72px;text-align:center;font-size:14.67px;line-height:16px;color:#217346">L</div>
<div class="t" style="left:1478px;top:162px;width:72px;text-align:center;font-size:14.67px;line-height:16px;color:#262626">M</div>
<div class="t" style="left:1550px;top:162px;width:72px;text-align:center;font-size:14.67px;line-height:16px;color:#262626">N</div>
<div class="t" style="left:1622px;top:162px;width:72px;text-align:center;font-size:14.67px;line-height:16px;color:#262626">O</div>
<div class="t" style="left:1694px;top:162px;width:72px;text-align:center;font-size:14.67px;line-height:16px;color:#262626">P</div>
<div class="t" style="left:1766px;top:162px;width:72px;text-align:center;font-size:14.67px;line-height:16px;color:#262626">Q</div>
<div class="t" style="left:1838px;top:162px;width:72px;text-align:center;font-size:14.67px;line-height:16px;color:#262626">R</div>
<div class="a" style="left:0;top:178px;width:1898px;height:804px;overflow:hidden"><div class="t" style="left:0;top:3px;width:28px;text-align:center;font-size:14.67px;line-height:17px;color:#000;color:#262626">1</div><div class="t" style="left:31px;top:3px;font-size:14.67px;line-height:17px;color:#000">网关名称</div><div class="t" style="left:103px;top:3px;font-size:14.67px;line-height:17px;color:#000">告警点名</div><div class="t" style="left:332px;top:3px;font-size:14.67px;line-height:17px;color:#000">告警内容</div><div class="t" style="left:404px;top:3px;font-size:14.67px;line-height:17px;color:#000">告警值</div><div class="t" style="left:476px;top:3px;font-size:14.67px;line-height:17px;color:#000">告警信息</div><div class="t" style="left:912px;top:3px;font-size:14.67px;line-height:17px;color:#000">时间</div><div class="t" style="left:0;top:22px;width:28px;text-align:center;font-size:14.67px;line-height:17px;color:#000;color:#262626">2</div><div class="t" style="left:31px;top:22px;font-size:14.67px;line-height:17px;color:#000"><span style="letter-spacing:-0.35px">X2View</span></div><div class="t" style="left:103px;top:22px;font-size:14.67px;line-height:17px;color:#000"><span style="letter-spacing:-0.35px">Demo_W7.1001.D3.</span>二通阀给定</div><div class="t" style="left:332px;top:22px;font-size:14.67px;line-height:17px;color:#000">值过高</div><div class="t" style="left:404px;top:22px;font-size:14.67px;line-height:17px;color:#000"><span style="letter-spacing:-0.35px">97</span></div><div class="t" style="left:476px;top:22px;font-size:14.67px;line-height:17px;color:#000">值过高<span style="letter-spacing:-0.35px">@Demo_W7.1001.D3.</span>二通阀给定<span style="letter-spacing:-0.35px">:97</span></div><div class="t" style="left:909px;top:22px;width:135px;text-align:right;font-size:14.67px;line-height:17px;color:#000;letter-spacing:0.28px">2023-11-25 15:29</div><div class="t" style="left:0;top:41px;width:28px;text-align:center;font-size:14.67px;line-height:17px;color:#000;color:#262626">3</div><div class="t" style="left:31px;top:41px;font-size:14.67px;line-height:17px;color:#000"><span style="letter-spacing:-0.35px">X2View</span></div><div class="t" style="left:103px;top:41px;font-size:14.67px;line-height:17px;color:#000"><span style="letter-spacing:-0.35px">Demo_W7.1001.D3.</span>二通阀给定</div><div class="t" style="left:332px;top:41px;font-size:14.67px;line-height:17px;color:#000">值过高</div><div class="t" style="left:404px;top:41px;font-size:14.67px;line-height:17px;color:#000"><span style="letter-spacing:-0.35px">98</span></div><div class="t" style="left:476px;top:41px;font-size:14.67px;line-height:17px;color:#000">值过高<span style="letter-spacing:-0.35px">@Demo_W7.1001.D3.</span>二通阀给定<span style="letter-spacing:-0.35px">:98</span></div><div class="t" style="left:909px;top:41px;width:135px;text-align:right;font-size:14.67px;line-height:17px;color:#000;letter-spacing:0.28px">2023-11-25 15:29</div><div class="t" style="left:0;top:60px;width:28px;text-align:center;font-size:14.67px;line-height:17px;color:#000;color:#262626">4</div><div class="t" style="left:31px;top:60px;font-size:14.67px;line-height:17px;color:#000"><span style="letter-spacing:-0.35px">X2View</span></div><div class="t" style="left:103px;top:60px;font-size:14.67px;line-height:17px;color:#000"><span style="letter-spacing:-0.35px">Demo_W7.1001.D3.</span>二通阀给定</div><div class="t" style="left:332px;top:60px;font-size:14.67px;line-height:17px;color:#000">值过高</div><div class="t" style="left:404px;top:60px;font-size:14.67px;line-height:17px;color:#000"><span style="letter-spacing:-0.35px">79</span></div><div class="t" style="left:476px;top:60px;font-size:14.67px;line-height:17px;color:#000">值过高<span style="letter-spacing:-0.35px">@Demo_W7.1001.D3.</span>二通阀给定<span style="letter-spacing:-0.35px">:79</span></div><div class="t" style="left:909px;top:60px;width:135px;text-align:right;font-size:14.67px;line-height:17px;color:#000;letter-spacing:0.28px">2023-11-25 15:29</div><div class="t" style="left:0;top:79px;width:28px;text-align:center;font-size:14.67px;line-height:17px;color:#000;color:#262626">5</div><div class="t" style="left:31px;top:79px;font-size:14.67px;line-height:17px;color:#000"><span style="letter-spacing:-0.35px">X2View</span></div><div class="t" style="left:103px;top:79px;font-size:14.67px;line-height:17px;color:#000"><span style="letter-spacing:-0.35px">Demo_W7.1001.D3.</span>二通阀给定</div><div class="t" style="left:332px;top:79px;font-size:14.67px;line-height:17px;color:#000">值过高</div><div class="t" style="left:404px;top:79px;font-size:14.67px;line-height:17px;color:#000"><span style="letter-spacing:-0.35px">97</span></div><div class="t" style="left:476px;top:79px;font-size:14.67px;line-height:17px;color:#000">值过高<span style="letter-spacing:-0.35px">@Demo_W7.1001.D3.</span>二通阀给定<span style="letter-spacing:-0.35px">:97</span></div><div class="t" style="left:909px;top:79px;width:135px;text-align:right;font-size:14.67px;line-height:17px;color:#000;letter-spacing:0.28px">2023-11-25 15:29</div><div class="t" style="left:0;top:98px;width:28px;text-align:center;font-size:14.67px;line-height:17px;color:#000;color:#262626">6</div><div class="t" style="left:31px;top:98px;font-size:14.67px;line-height:17px;color:#000"><span style="letter-spacing:-0.35px">X2View</span></div><div class="t" style="left:103px;top:98px;font-size:14.67px;line-height:17px;color:#000"><span style="letter-spacing:-0.35px">Demo_W7.1001.D3.</span>二通阀给定</div><div class="t" style="left:332px;top:98px;font-size:14.67px;line-height:17px;color:#000">值过高</div><div class="t" style="left:404px;top:98px;font-size:14.67px;line-height:17px;color:#000"><span style="letter-spacing:-0.35px">72</span></div><div class="t" style="left:476px;top:98px;font-size:14.67px;line-height:17px;color:#000">值过高<span style="letter-spacing:-0.35px">@Demo_W7.1001.D3.</span>二通阀给定<span style="letter-spacing:-0.35px">:72</span></div><div class="t" style="left:909px;top:98px;width:135px;text-align:right;font-size:14.67px;line-height:17px;color:#000;letter-spacing:0.28px">2023-11-25 15:29</div><div class="t" style="left:0;top:117px;width:28px;text-align:center;font-size:14.67px;line-height:17px;color:#000;color:#262626">7</div><div class="t" style="left:31px;top:117px;font-size:14.67px;line-height:17px;color:#000"><span style="letter-spacing:-0.35px">X2View</span></div><div class="t" style="left:103px;top:117px;font-size:14.67px;line-height:17px;color:#000"><span style="letter-spacing:-0.35px">Demo_W7.1001.D3.</span>二通阀给定</div><div class="t" style="left:332px;top:117px;font-size:14.67px;line-height:17px;color:#000">值过高</div><div class="t" style="left:404px;top:117px;font-size:14.67px;line-height:17px;color:#000"><span style="letter-spacing:-0.35px">88</span></div><div class="t" style="left:476px;top:117px;font-size:14.67px;line-height:17px;color:#000">值过高<span style="letter-spacing:-0.35px">@Demo_W7.1001.D3.</span>二通阀给定<span style="letter-spacing:-0.35px">:88</span></div><div class="t" style="left:909px;top:117px;width:135px;text-align:right;font-size:14.67px;line-height:17px;color:#000;letter-spacing:0.28px">2023-11-25 15:29</div><div class="t" style="left:0;top:136px;width:28px;text-align:center;font-size:14.67px;line-height:17px;color:#000;color:#262626">8</div><div class="t" style="left:31px;top:136px;font-size:14.67px;line-height:17px;color:#000"><span style="letter-spacing:-0.35px">X2View</span></div><div class="t" style="left:103px;top:136px;font-size:14.67px;line-height:17px;color:#000"><span style="letter-spacing:-0.35px">Demo_W7.1001.D3.</span>二通阀给定</div><div class="t" style="left:332px;top:136px;font-size:14.67px;line-height:17px;color:#000">值过高</div><div class="t" style="left:404px;top:136px;font-size:14.67px;line-height:17px;color:#000"><span style="letter-spacing:-0.35px">88</span></div><div class="t" style="left:476px;top:136px;font-size:14.67px;line-height:17px;color:#000">值过高<span style="letter-spacing:-0.35px">@Demo_W7.1001.D3.</span>二通阀给定<span style="letter-spacing:-0.35px">:88</span></div><div class="t" style="left:909px;top:136px;width:135px;text-align:right;font-size:14.67px;line-height:17px;color:#000;letter-spacing:0.28px">2023-11-25 15:29</div><div class="t" style="left:0;top:155px;width:28px;text-align:center;font-size:14.67px;line-height:17px;color:#000;color:#262626">9</div><div class="t" style="left:31px;top:155px;font-size:14.67px;line-height:17px;color:#000"><span style="letter-spacing:-0.35px">X2View</span></div><div class="t" style="left:103px;top:155px;font-size:14.67px;line-height:17px;color:#000"><span style="letter-spacing:-0.35px">Demo_W7.1001.D3.</span>二通阀给定</div><div class="t" style="left:332px;top:155px;font-size:14.67px;line-height:17px;color:#000">值过高</div><div class="t" style="left:404px;top:155px;font-size:14.67px;line-height:17px;color:#000"><span style="letter-spacing:-0.35px">53</span></div><div class="t" style="left:476px;top:155px;font-size:14.67px;line-height:17px;color:#000">值过高<span style="letter-spacing:-0.35px">@Demo_W7.1001.D3.</span>二通阀给定<span style="letter-spacing:-0.35px">:53</span></div><div class="t" style="left:909px;top:155px;width:135px;text-align:right;font-size:14.67px;line-height:17px;color:#000;letter-spacing:0.28px">2023-11-25 15:29</div><div class="t" style="left:0;top:174px;width:28px;text-align:center;font-size:14.67px;line-height:17px;color:#000;color:#262626">10</div><div class="t" style="left:31px;top:174px;font-size:14.67px;line-height:17px;color:#000"><span style="letter-spacing:-0.35px">X2View</span></div><div class="t" style="left:103px;top:174px;font-size:14.67px;line-height:17px;color:#000"><span style="letter-spacing:-0.35px">Demo_W7.1001.D3.</span>二通阀给定</div><div class="t" style="left:332px;top:174px;font-size:14.67px;line-height:17px;color:#000">值过高</div><div class="t" style="left:404px;top:174px;font-size:14.67px;line-height:17px;color:#000"><span style="letter-spacing:-0.35px">57</span></div><div class="t" style="left:476px;top:174px;font-size:14.67px;line-height:17px;color:#000">值过高<span style="letter-spacing:-0.35px">@Demo_W7.1001.D3.</span>二通阀给定<span style="letter-spacing:-0.35px">:57</span></div><div class="t" style="left:909px;top:174px;width:135px;text-align:right;font-size:14.67px;line-height:17px;color:#000;letter-spacing:0.28px">2023-11-25 15:29</div><div class="t" style="left:0;top:193px;width:28px;text-align:center;font-size:14.67px;line-height:17px;color:#000;color:#262626">11</div><div class="t" style="left:31px;top:193px;font-size:14.67px;line-height:17px;color:#000"><span style="letter-spacing:-0.35px">X2View</span></div><div class="t" style="left:103px;top:193px;font-size:14.67px;line-height:17px;color:#000"><span style="letter-spacing:-0.35px">Demo_W7.1001.D3.</span>二通阀给定</div><div class="t" style="left:332px;top:193px;font-size:14.67px;line-height:17px;color:#000">值过高</div><div class="t" style="left:404px;top:193px;font-size:14.67px;line-height:17px;color:#000"><span style="letter-spacing:-0.35px">76</span></div><div class="t" style="left:476px;top:193px;font-size:14.67px;line-height:17px;color:#000">值过高<span style="letter-spacing:-0.35px">@Demo_W7.1001.D3.</span>二通阀给定<span style="letter-spacing:-0.35px">:76</span></div><div class="t" style="left:909px;top:193px;width:135px;text-align:right;font-size:14.67px;line-height:17px;color:#000;letter-spacing:0.28px">2023-11-25 15:29</div><div class="t" style="left:0;top:212px;width:28px;text-align:center;font-size:14.67px;line-height:17px;color:#000;color:#262626">12</div><div class="t" style="left:31px;top:212px;font-size:14.67px;line-height:17px;color:#000"><span style="letter-spacing:-0.35px">X2View</span></div><div class="t" style="left:103px;top:212px;font-size:14.67px;line-height:17px;color:#000"><span style="letter-spacing:-0.35px">Demo_W7.1001.D3.</span>二通阀给定</div><div class="t" style="left:332px;top:212px;font-size:14.67px;line-height:17px;color:#000">值过高</div><div class="t" style="left:404px;top:212px;font-size:14.67px;line-height:17px;color:#000"><span style="letter-spacing:-0.35px">95</span></div><div class="t" style="left:476px;top:212px;font-size:14.67px;line-height:17px;color:#000">值过高<span style="letter-spacing:-0.35px">@Demo_W7.1001.D3.</span>二通阀给定<span style="letter-spacing:-0.35px">:95</span></div><div class="t" style="left:909px;top:212px;width:135px;text-align:right;font-size:14.67px;line-height:17px;color:#000;letter-spacing:0.28px">2023-11-25 15:29</div><div class="t" style="left:0;top:231px;width:28px;text-align:center;font-size:14.67px;line-height:17px;color:#000;color:#262626">13</div><div class="t" style="left:31px;top:231px;font-size:14.67px;line-height:17px;color:#000"><span style="letter-spacing:-0.35px">X2View</span></div><div class="t" style="left:103px;top:231px;font-size:14.67px;line-height:17px;color:#000"><span style="letter-spacing:-0.35px">Demo_W7.1001.D3.</span>二通阀给定</div><div class="t" style="left:332px;top:231px;font-size:14.67px;line-height:17px;color:#000">值过高</div><div class="t" style="left:404px;top:231px;font-size:14.67px;line-height:17px;color:#000"><span style="letter-spacing:-0.35px">98</span></div><div class="t" style="left:476px;top:231px;font-size:14.67px;line-height:17px;color:#000">值过高<span style="letter-spacing:-0.35px">@Demo_W7.1001.D3.</span>二通阀给定<span style="letter-spacing:-0.35px">:98</span></div><div class="t" style="left:909px;top:231px;width:135px;text-align:right;font-size:14.67px;line-height:17px;color:#000;letter-spacing:0.28px">2023-11-25 15:29</div><div class="t" style="left:0;top:250px;width:28px;text-align:center;font-size:14.67px;line-height:17px;color:#000;color:#262626">14</div><div class="t" style="left:31px;top:250px;font-size:14.67px;line-height:17px;color:#000"><span style="letter-spacing:-0.35px">X2View</span></div><div class="t" style="left:103px;top:250px;font-size:14.67px;line-height:17px;color:#000"><span style="letter-spacing:-0.35px">Demo_W7.1001.D3.</span>二通阀给定</div><div class="t" style="left:332px;top:250px;font-size:14.67px;line-height:17px;color:#000">值过高</div><div class="t" style="left:404px;top:250px;font-size:14.67px;line-height:17px;color:#000"><span style="letter-spacing:-0.35px">97</span></div><div class="t" style="left:476px;top:250px;font-size:14.67px;line-height:17px;color:#000">值过高<span style="letter-spacing:-0.35px">@Demo_W7.1001.D3.</span>二通阀给定<span style="letter-spacing:-0.35px">:97</span></div><div class="t" style="left:909px;top:250px;width:135px;text-align:right;font-size:14.67px;line-height:17px;color:#000;letter-spacing:0.28px">2023-11-25 15:29</div><div class="t" style="left:0;top:269px;width:28px;text-align:center;font-size:14.67px;line-height:17px;color:#000;color:#262626">15</div><div class="t" style="left:31px;top:269px;font-size:14.67px;line-height:17px;color:#000"><span style="letter-spacing:-0.35px">X2View</span></div><div class="t" style="left:103px;top:269px;font-size:14.67px;line-height:17px;color:#000"><span style="letter-spacing:-0.35px">Demo_W7.1001.D3.</span>二通阀给定</div><div class="t" style="left:332px;top:269px;font-size:14.67px;line-height:17px;color:#000">值过高</div><div class="t" style="left:404px;top:269px;font-size:14.67px;line-height:17px;color:#000"><span style="letter-spacing:-0.35px">50</span></div><div class="t" style="left:476px;top:269px;font-size:14.67px;line-height:17px;color:#000">值过高<span style="letter-spacing:-0.35px">@Demo_W7.1001.D3.</span>二通阀给定<span style="letter-spacing:-0.35px">:50</span></div><div class="t" style="left:909px;top:269px;width:135px;text-align:right;font-size:14.67px;line-height:17px;color:#000;letter-spacing:0.28px">2023-11-25 15:29</div><div class="t" style="left:0;top:288px;width:28px;text-align:center;font-size:14.67px;line-height:17px;color:#000;color:#262626">16</div><div class="t" style="left:31px;top:288px;font-size:14.67px;line-height:17px;color:#000"><span style="letter-spacing:-0.35px">X2View</span></div><div class="t" style="left:103px;top:288px;font-size:14.67px;line-height:17px;color:#000"><span style="letter-spacing:-0.35px">Demo_W7.1001.D3.</span>二通阀给定</div><div class="t" style="left:332px;top:288px;font-size:14.67px;line-height:17px;color:#000">值过高</div><div class="t" style="left:404px;top:288px;font-size:14.67px;line-height:17px;color:#000"><span style="letter-spacing:-0.35px">62</span></div><div class="t" style="left:476px;top:288px;font-size:14.67px;line-height:17px;color:#000">值过高<span style="letter-spacing:-0.35px">@Demo_W7.1001.D3.</span>二通阀给定<span style="letter-spacing:-0.35px">:62</span></div><div class="t" style="left:909px;top:288px;width:135px;text-align:right;font-size:14.67px;line-height:17px;color:#000;letter-spacing:0.28px">2023-11-25 15:29</div><div class="t" style="left:0;top:307px;width:28px;text-align:center;font-size:14.67px;line-height:17px;color:#000;color:#262626">17</div><div class="t" style="left:31px;top:307px;font-size:14.67px;line-height:17px;color:#000"><span style="letter-spacing:-0.35px">X2View</span></div><div class="t" style="left:103px;top:307px;font-size:14.67px;line-height:17px;color:#000"><span style="letter-spacing:-0.35px">Demo_W7.1001.D3.</span>二通阀给定</div><div class="t" style="left:332px;top:307px;font-size:14.67px;line-height:17px;color:#000">值过高</div><div class="t" style="left:404px;top:307px;font-size:14.67px;line-height:17px;color:#000"><span style="letter-spacing:-0.35px">54</span></div><div class="t" style="left:476px;top:307px;font-size:14.67px;line-height:17px;color:#000">值过高<span style="letter-spacing:-0.35px">@Demo_W7.1001.D3.</span>二通阀给定<span style="letter-spacing:-0.35px">:54</span></div><div class="t" style="left:909px;top:307px;width:135px;text-align:right;font-size:14.67px;line-height:17px;color:#000;letter-spacing:0.28px">2023-11-25 15:29</div><div class="t" style="left:0;top:326px;width:28px;text-align:center;font-size:14.67px;line-height:17px;color:#000;color:#217346">18</div><div class="t" style="left:31px;top:326px;font-size:14.67px;line-height:17px;color:#000"><span style="letter-spacing:-0.35px">X2View</span></div><div class="t" style="left:103px;top:326px;font-size:14.67px;line-height:17px;color:#000"><span style="letter-spacing:-0.35px">Demo_W7.1001.D3.</span>二通阀给定</div><div class="t" style="left:332px;top:326px;font-size:14.67px;line-height:17px;color:#000">值过高</div><div class="t" style="left:404px;top:326px;font-size:14.67px;line-height:17px;color:#000"><span style="letter-spacing:-0.35px">67</span></div><div class="t" style="left:476px;top:326px;font-size:14.67px;line-height:17px;color:#000">值过高<span style="letter-spacing:-0.35px">@Demo_W7.1001.D3.</span>二通阀给定<span style="letter-spacing:-0.35px">:67</span></div><div class="t" style="left:909px;top:326px;width:135px;text-align:right;font-size:14.67px;line-height:17px;color:#000;letter-spacing:0.28px">2023-11-25 15:29</div><div class="t" style="left:0;top:345px;width:28px;text-align:center;font-size:14.67px;line-height:17px;color:#000;color:#262626">19</div><div class="t" style="left:31px;top:345px;font-size:14.67px;line-height:17px;color:#000"><span style="letter-spacing:-0.35px">X2View</span></div><div class="t" style="left:103px;top:345px;font-size:14.67px;line-height:17px;color:#000"><span style="letter-spacing:-0.35px">Demo_W7.1001.D3.</span>二通阀给定</div><div class="t" style="left:332px;top:345px;font-size:14.67px;line-height:17px;color:#000">值过高</div><div class="t" style="left:404px;top:345px;font-size:14.67px;line-height:17px;color:#000"><span style="letter-spacing:-0.35px">75</span></div><div class="t" style="left:476px;top:345px;font-size:14.67px;line-height:17px;color:#000">值过高<span style="letter-spacing:-0.35px">@Demo_W7.1001.D3.</span>二通阀给定<span style="letter-spacing:-0.35px">:75</span></div><div class="t" style="left:909px;top:345px;width:135px;text-align:right;font-size:14.67px;line-height:17px;color:#000;letter-spacing:0.28px">2023-11-25 15:29</div><div class="t" style="left:0;top:364px;width:28px;text-align:center;font-size:14.67px;line-height:17px;color:#000;color:#262626">20</div><div class="t" style="left:31px;top:364px;font-size:14.67px;line-height:17px;color:#000"><span style="letter-spacing:-0.35px">X2View</span></div><div class="t" style="left:103px;top:364px;font-size:14.67px;line-height:17px;color:#000"><span style="letter-spacing:-0.35px">Demo_W7.1001.D3.</span>二通阀给定</div><div class="t" style="left:332px;top:364px;font-size:14.67px;line-height:17px;color:#000">值过高</div><div class="t" style="left:404px;top:364px;font-size:14.67px;line-height:17px;color:#000"><span style="letter-spacing:-0.35px">62</span></div><div class="t" style="left:476px;top:364px;font-size:14.67px;line-height:17px;color:#000">值过高<span style="letter-spacing:-0.35px">@Demo_W7.1001.D3.</span>二通阀给定<span style="letter-spacing:-0.35px">:62</span></div><div class="t" style="left:909px;top:364px;width:135px;text-align:right;font-size:14.67px;line-height:17px;color:#000;letter-spacing:0.28px">2023-11-25 15:29</div><div class="t" style="left:0;top:383px;width:28px;text-align:center;font-size:14.67px;line-height:17px;color:#000;color:#262626">21</div><div class="t" style="left:31px;top:383px;font-size:14.67px;line-height:17px;color:#000"><span style="letter-spacing:-0.35px">X2View</span></div><div class="t" style="left:103px;top:383px;font-size:14.67px;line-height:17px;color:#000"><span style="letter-spacing:-0.35px">Demo_W7.1001.D3.</span>二通阀给定</div><div class="t" style="left:332px;top:383px;font-size:14.67px;line-height:17px;color:#000">值过高</div><div class="t" style="left:404px;top:383px;font-size:14.67px;line-height:17px;color:#000"><span style="letter-spacing:-0.35px">53</span></div><div class="t" style="left:476px;top:383px;font-size:14.67px;line-height:17px;color:#000">值过高<span style="letter-spacing:-0.35px">@Demo_W7.1001.D3.</span>二通阀给定<span style="letter-spacing:-0.35px">:53</span></div><div class="t" style="left:909px;top:383px;width:135px;text-align:right;font-size:14.67px;line-height:17px;color:#000;letter-spacing:0.28px">2023-11-25 15:29</div><div class="t" style="left:0;top:402px;width:28px;text-align:center;font-size:14.67px;line-height:17px;color:#000;color:#262626">22</div><div class="t" style="left:31px;top:402px;font-size:14.67px;line-height:17px;color:#000"><span style="letter-spacing:-0.35px">X2View</span></div><div class="t" style="left:103px;top:402px;font-size:14.67px;line-height:17px;color:#000"><span style="letter-spacing:-0.35px">Demo_W7.1001.D3.</span>二通阀给定</div><div class="t" style="left:332px;top:402px;font-size:14.67px;line-height:17px;color:#000">值过高</div><div class="t" style="left:404px;top:402px;font-size:14.67px;line-height:17px;color:#000"><span style="letter-spacing:-0.35px">87</span></div><div class="t" style="left:476px;top:402px;font-size:14.67px;line-height:17px;color:#000">值过高<span style="letter-spacing:-0.35px">@Demo_W7.1001.D3.</span>二通阀给定<span style="letter-spacing:-0.35px">:87</span></div><div class="t" style="left:909px;top:402px;width:135px;text-align:right;font-size:14.67px;line-height:17px;color:#000;letter-spacing:0.28px">2023-11-25 15:29</div><div class="t" style="left:0;top:421px;width:28px;text-align:center;font-size:14.67px;line-height:17px;color:#000;color:#262626">23</div><div class="t" style="left:31px;top:421px;font-size:14.67px;line-height:17px;color:#000"><span style="letter-spacing:-0.35px">X2View</span></div><div class="t" style="left:103px;top:421px;font-size:14.67px;line-height:17px;color:#000"><span style="letter-spacing:-0.35px">Demo_W7.1001.D3.</span>二通阀给定</div><div class="t" style="left:332px;top:421px;font-size:14.67px;line-height:17px;color:#000">值过高</div><div class="t" style="left:404px;top:421px;font-size:14.67px;line-height:17px;color:#000"><span style="letter-spacing:-0.35px">81</span></div><div class="t" style="left:476px;top:421px;font-size:14.67px;line-height:17px;color:#000">值过高<span style="letter-spacing:-0.35px">@Demo_W7.1001.D3.</span>二通阀给定<span style="letter-spacing:-0.35px">:81</span></div><div class="t" style="left:909px;top:421px;width:135px;text-align:right;font-size:14.67px;line-height:17px;color:#000;letter-spacing:0.28px">2023-11-25 15:29</div><div class="t" style="left:0;top:440px;width:28px;text-align:center;font-size:14.67px;line-height:17px;color:#000;color:#262626">24</div><div class="t" style="left:31px;top:440px;font-size:14.67px;line-height:17px;color:#000"><span style="letter-spacing:-0.35px">X2View</span></div><div class="t" style="left:103px;top:440px;font-size:14.67px;line-height:17px;color:#000"><span style="letter-spacing:-0.35px">Demo_W7.1001.D3.</span>二通阀给定</div><div class="t" style="left:332px;top:440px;font-size:14.67px;line-height:17px;color:#000">值过高</div><div class="t" style="left:404px;top:440px;font-size:14.67px;line-height:17px;color:#000"><span style="letter-spacing:-0.35px">96</span></div><div class="t" style="left:476px;top:440px;font-size:14.67px;line-height:17px;color:#000">值过高<span style="letter-spacing:-0.35px">@Demo_W7.1001.D3.</span>二通阀给定<span style="letter-spacing:-0.35px">:96</span></div><div class="t" style="left:909px;top:440px;width:135px;text-align:right;font-size:14.67px;line-height:17px;color:#000;letter-spacing:0.28px">2023-11-25 15:29</div><div class="t" style="left:0;top:459px;width:28px;text-align:center;font-size:14.67px;line-height:17px;color:#000;color:#262626">25</div><div class="t" style="left:31px;top:459px;font-size:14.67px;line-height:17px;color:#000"><span style="letter-spacing:-0.35px">X2View</span></div><div class="t" style="left:103px;top:459px;font-size:14.67px;line-height:17px;color:#000"><span style="letter-spacing:-0.35px">Demo_W7.1001.D3.</span>二通阀给定</div><div class="t" style="left:332px;top:459px;font-size:14.67px;line-height:17px;color:#000">值过高</div><div class="t" style="left:404px;top:459px;font-size:14.67px;line-height:17px;color:#000"><span style="letter-spacing:-0.35px">78</span></div><div class="t" style="left:476px;top:459px;font-size:14.67px;line-height:17px;color:#000">值过高<span style="letter-spacing:-0.35px">@Demo_W7.1001.D3.</span>二通阀给定<span style="letter-spacing:-0.35px">:78</span></div><div class="t" style="left:909px;top:459px;width:135px;text-align:right;font-size:14.67px;line-height:17px;color:#000;letter-spacing:0.28px">2023-11-25 15:29</div><div class="t" style="left:0;top:478px;width:28px;text-align:center;font-size:14.67px;line-height:17px;color:#000;color:#262626">26</div><div class="t" style="left:31px;top:478px;font-size:14.67px;line-height:17px;color:#000"><span style="letter-spacing:-0.35px">X2View</span></div><div class="t" style="left:103px;top:478px;font-size:14.67px;line-height:17px;color:#000"><span style="letter-spacing:-0.35px">Demo_W7.1001.D3.</span>二通阀给定</div><div class="t" style="left:332px;top:478px;font-size:14.67px;line-height:17px;color:#000">值过高</div><div class="t" style="left:404px;top:478px;font-size:14.67px;line-height:17px;color:#000"><span style="letter-spacing:-0.35px">88</span></div><div class="t" style="left:476px;top:478px;font-size:14.67px;line-height:17px;color:#000">值过高<span style="letter-spacing:-0.35px">@Demo_W7.1001.D3.</span>二通阀给定<span style="letter-spacing:-0.35px">:88</span></div><div class="t" style="left:909px;top:478px;width:135px;text-align:right;font-size:14.67px;line-height:17px;color:#000;letter-spacing:0.28px">2023-11-25 15:29</div><div class="t" style="left:0;top:497px;width:28px;text-align:center;font-size:14.67px;line-height:17px;color:#000;color:#262626">27</div><div class="t" style="left:31px;top:497px;font-size:14.67px;line-height:17px;color:#000"><span style="letter-spacing:-0.35px">X2View</span></div><div class="t" style="left:103px;top:497px;font-size:14.67px;line-height:17px;color:#000"><span style="letter-spacing:-0.35px">Demo_W7.1001.D3.</span>二通阀给定</div><div class="t" style="left:332px;top:497px;font-size:14.67px;line-height:17px;color:#000">值过高</div><div class="t" style="left:404px;top:497px;font-size:14.67px;line-height:17px;color:#000"><span style="letter-spacing:-0.35px">90</span></div><div class="t" style="left:476px;top:497px;font-size:14.67px;line-height:17px;color:#000">值过高<span style="letter-spacing:-0.35px">@Demo_W7.1001.D3.</span>二通阀给定<span style="letter-spacing:-0.35px">:90</span></div><div class="t" style="left:909px;top:497px;width:135px;text-align:right;font-size:14.67px;line-height:17px;color:#000;letter-spacing:0.28px">2023-11-25 15:29</div><div class="t" style="left:0;top:516px;width:28px;text-align:center;font-size:14.67px;line-height:17px;color:#000;color:#262626">28</div><div class="t" style="left:31px;top:516px;font-size:14.67px;line-height:17px;color:#000"><span style="letter-spacing:-0.35px">X2View</span></div><div class="t" style="left:103px;top:516px;font-size:14.67px;line-height:17px;color:#000"><span style="letter-spacing:-0.35px">Demo_W7.1001.D3.</span>二通阀给定</div><div class="t" style="left:332px;top:516px;font-size:14.67px;line-height:17px;color:#000">值过高</div><div class="t" style="left:404px;top:516px;font-size:14.67px;line-height:17px;color:#000"><span style="letter-spacing:-0.35px">65</span></div><div class="t" style="left:476px;top:516px;font-size:14.67px;line-height:17px;color:#000">值过高<span style="letter-spacing:-0.35px">@Demo_W7.1001.D3.</span>二通阀给定<span style="letter-spacing:-0.35px">:65</span></div><div class="t" style="left:909px;top:516px;width:135px;text-align:right;font-size:14.67px;line-height:17px;color:#000;letter-spacing:0.28px">2023-11-25 15:29</div><div class="t" style="left:0;top:535px;width:28px;text-align:center;font-size:14.67px;line-height:17px;color:#000;color:#262626">29</div><div class="t" style="left:31px;top:535px;font-size:14.67px;line-height:17px;color:#000"><span style="letter-spacing:-0.35px">X2View</span></div><div class="t" style="left:103px;top:535px;font-size:14.67px;line-height:17px;color:#000"><span style="letter-spacing:-0.35px">Demo_W7.1001.D3.</span>二通阀给定</div><div class="t" style="left:332px;top:535px;font-size:14.67px;line-height:17px;color:#000">值过高</div><div class="t" style="left:404px;top:535px;font-size:14.67px;line-height:17px;color:#000"><span style="letter-spacing:-0.35px">67</span></div><div class="t" style="left:476px;top:535px;font-size:14.67px;line-height:17px;color:#000">值过高<span style="letter-spacing:-0.35px">@Demo_W7.1001.D3.</span>二通阀给定<span style="letter-spacing:-0.35px">:67</span></div><div class="t" style="left:909px;top:535px;width:135px;text-align:right;font-size:14.67px;line-height:17px;color:#000;letter-spacing:0.28px">2023-11-25 15:29</div><div class="t" style="left:0;top:554px;width:28px;text-align:center;font-size:14.67px;line-height:17px;color:#000;color:#262626">30</div><div class="t" style="left:31px;top:554px;font-size:14.67px;line-height:17px;color:#000"><span style="letter-spacing:-0.35px">X2View</span></div><div class="t" style="left:103px;top:554px;font-size:14.67px;line-height:17px;color:#000"><span style="letter-spacing:-0.35px">Demo_W7.1001.D3.</span>二通阀给定</div><div class="t" style="left:332px;top:554px;font-size:14.67px;line-height:17px;color:#000">值过高</div><div class="t" style="left:404px;top:554px;font-size:14.67px;line-height:17px;color:#000"><span style="letter-spacing:-0.35px">73</span></div><div class="t" style="left:476px;top:554px;font-size:14.67px;line-height:17px;color:#000">值过高<span style="letter-spacing:-0.35px">@Demo_W7.1001.D3.</span>二通阀给定<span style="letter-spacing:-0.35px">:73</span></div><div class="t" style="left:909px;top:554px;width:135px;text-align:right;font-size:14.67px;line-height:17px;color:#000;letter-spacing:0.28px">2023-11-25 15:29</div><div class="t" style="left:0;top:573px;width:28px;text-align:center;font-size:14.67px;line-height:17px;color:#000;color:#262626">31</div><div class="t" style="left:31px;top:573px;font-size:14.67px;line-height:17px;color:#000"><span style="letter-spacing:-0.35px">X2View</span></div><div class="t" style="left:103px;top:573px;font-size:14.67px;line-height:17px;color:#000"><span style="letter-spacing:-0.35px">Demo_W7.1001.D3.</span>二通阀给定</div><div class="t" style="left:332px;top:573px;font-size:14.67px;line-height:17px;color:#000">值过高</div><div class="t" style="left:404px;top:573px;font-size:14.67px;line-height:17px;color:#000"><span style="letter-spacing:-0.35px">50</span></div><div class="t" style="left:476px;top:573px;font-size:14.67px;line-height:17px;color:#000">值过高<span style="letter-spacing:-0.35px">@Demo_W7.1001.D3.</span>二通阀给定<span style="letter-spacing:-0.35px">:50</span></div><div class="t" style="left:909px;top:573px;width:135px;text-align:right;font-size:14.67px;line-height:17px;color:#000;letter-spacing:0.28px">2023-11-25 15:29</div><div class="t" style="left:0;top:592px;width:28px;text-align:center;font-size:14.67px;line-height:17px;color:#000;color:#262626">32</div><div class="t" style="left:31px;top:592px;font-size:14.67px;line-height:17px;color:#000"><span style="letter-spacing:-0.35px">X2View</span></div><div class="t" style="left:103px;top:592px;font-size:14.67px;line-height:17px;color:#000"><span style="letter-spacing:-0.35px">Demo_W7.1001.D3.</span>二通阀给定</div><div class="t" style="left:332px;top:592px;font-size:14.67px;line-height:17px;color:#000">值过高</div><div class="t" style="left:404px;top:592px;font-size:14.67px;line-height:17px;color:#000"><span style="letter-spacing:-0.35px">70</span></div><div class="t" style="left:476px;top:592px;font-size:14.67px;line-height:17px;color:#000">值过高<span style="letter-spacing:-0.35px">@Demo_W7.1001.D3.</span>二通阀给定<span style="letter-spacing:-0.35px">:70</span></div><div class="t" style="left:909px;top:592px;width:135px;text-align:right;font-size:14.67px;line-height:17px;color:#000;letter-spacing:0.28px">2023-11-25 15:29</div><div class="t" style="left:0;top:611px;width:28px;text-align:center;font-size:14.67px;line-height:17px;color:#000;color:#262626">33</div><div class="t" style="left:31px;top:611px;font-size:14.67px;line-height:17px;color:#000"><span style="letter-spacing:-0.35px">X2View</span></div><div class="t" style="left:103px;top:611px;font-size:14.67px;line-height:17px;color:#000"><span style="letter-spacing:-0.35px">Demo_W7.1001.D3.</span>二通阀给定</div><div class="t" style="left:332px;top:611px;font-size:14.67px;line-height:17px;color:#000">值过高</div><div class="t" style="left:404px;top:611px;font-size:14.67px;line-height:17px;color:#000"><span style="letter-spacing:-0.35px">86</span></div><div class="t" style="left:476px;top:611px;font-size:14.67px;line-height:17px;color:#000">值过高<span style="letter-spacing:-0.35px">@Demo_W7.1001.D3.</span>二通阀给定<span style="letter-spacing:-0.35px">:86</span></div><div class="t" style="left:909px;top:611px;width:135px;text-align:right;font-size:14.67px;line-height:17px;color:#000;letter-spacing:0.28px">2023-11-25 15:29</div><div class="t" style="left:0;top:630px;width:28px;text-align:center;font-size:14.67px;line-height:17px;color:#000;color:#262626">34</div><div class="t" style="left:31px;top:630px;font-size:14.67px;line-height:17px;color:#000"><span style="letter-spacing:-0.35px">X2View</span></div><div class="t" style="left:103px;top:630px;font-size:14.67px;line-height:17px;color:#000"><span style="letter-spacing:-0.35px">Demo_W7.1001.D3.</span>二通阀给定</div><div class="t" style="left:332px;top:630px;font-size:14.67px;line-height:17px;color:#000">值过高</div><div class="t" style="left:404px;top:630px;font-size:14.67px;line-height:17px;color:#000"><span style="letter-spacing:-0.35px">59</span></div><div class="t" style="left:476px;top:630px;font-size:14.67px;line-height:17px;color:#000">值过高<span style="letter-spacing:-0.35px">@Demo_W7.1001.D3.</span>二通阀给定<span style="letter-spacing:-0.35px">:59</span></div><div class="t" style="left:909px;top:630px;width:135px;text-align:right;font-size:14.67px;line-height:17px;color:#000;letter-spacing:0.28px">2023-11-25 15:29</div><div class="t" style="left:0;top:649px;width:28px;text-align:center;font-size:14.67px;line-height:17px;color:#000;color:#262626">35</div><div class="t" style="left:31px;top:649px;font-size:14.67px;line-height:17px;color:#000"><span style="letter-spacing:-0.35px">X2View</span></div><div class="t" style="left:103px;top:649px;font-size:14.67px;line-height:17px;color:#000"><span style="letter-spacing:-0.35px">Demo_W7.1001.D3.</span>二通阀给定</div><div class="t" style="left:332px;top:649px;font-size:14.67px;line-height:17px;color:#000">值过高</div><div class="t" style="left:404px;top:649px;font-size:14.67px;line-height:17px;color:#000"><span style="letter-spacing:-0.35px">84</span></div><div class="t" style="left:476px;top:649px;font-size:14.67px;line-height:17px;color:#000">值过高<span style="letter-spacing:-0.35px">@Demo_W7.1001.D3.</span>二通阀给定<span style="letter-spacing:-0.35px">:84</span></div><div class="t" style="left:909px;top:649px;width:135px;text-align:right;font-size:14.67px;line-height:17px;color:#000;letter-spacing:0.28px">2023-11-25 15:29</div><div class="t" style="left:0;top:668px;width:28px;text-align:center;font-size:14.67px;line-height:17px;color:#000;color:#262626">36</div><div class="t" style="left:31px;top:668px;font-size:14.67px;line-height:17px;color:#000"><span style="letter-spacing:-0.35px">X2View</span></div><div class="t" style="left:103px;top:668px;font-size:14.67px;line-height:17px;color:#000"><span style="letter-spacing:-0.35px">Demo_W7.1001.D3.</span>二通阀给定</div><div class="t" style="left:332px;top:668px;font-size:14.67px;line-height:17px;color:#000">值过高</div><div class="t" style="left:404px;top:668px;font-size:14.67px;line-height:17px;color:#000"><span style="letter-spacing:-0.35px">66</span></div><div class="t" style="left:476px;top:668px;font-size:14.67px;line-height:17px;color:#000">值过高<span style="letter-spacing:-0.35px">@Demo_W7.1001.D3.</span>二通阀给定<span style="letter-spacing:-0.35px">:66</span></div><div class="t" style="left:909px;top:668px;width:135px;text-align:right;font-size:14.67px;line-height:17px;color:#000;letter-spacing:0.28px">2023-11-25 15:29</div><div class="t" style="left:0;top:687px;width:28px;text-align:center;font-size:14.67px;line-height:17px;color:#000;color:#262626">37</div><div class="t" style="left:31px;top:687px;font-size:14.67px;line-height:17px;color:#000"><span style="letter-spacing:-0.35px">X2View</span></div><div class="t" style="left:103px;top:687px;font-size:14.67px;line-height:17px;color:#000"><span style="letter-spacing:-0.35px">Demo_W7.1001.D3.</span>二通阀给定</div><div class="t" style="left:332px;top:687px;font-size:14.67px;line-height:17px;color:#000">值过高</div><div class="t" style="left:404px;top:687px;font-size:14.67px;line-height:17px;color:#000"><span style="letter-spacing:-0.35px">54</span></div><div class="t" style="left:476px;top:687px;font-size:14.67px;line-height:17px;color:#000">值过高<span style="letter-spacing:-0.35px">@Demo_W7.1001.D3.</span>二通阀给定<span style="letter-spacing:-0.35px">:54</span></div><div class="t" style="left:909px;top:687px;width:135px;text-align:right;font-size:14.67px;line-height:17px;color:#000;letter-spacing:0.28px">2023-11-25 15:29</div><div class="t" style="left:0;top:706px;width:28px;text-align:center;font-size:14.67px;line-height:17px;color:#000;color:#262626">38</div><div class="t" style="left:31px;top:706px;font-size:14.67px;line-height:17px;color:#000"><span style="letter-spacing:-0.35px">X2View</span></div><div class="t" style="left:103px;top:706px;font-size:14.67px;line-height:17px;color:#000"><span style="letter-spacing:-0.35px">Demo_W7.1001.D3.</span>二通阀给定</div><div class="t" style="left:332px;top:706px;font-size:14.67px;line-height:17px;color:#000">值过高</div><div class="t" style="left:404px;top:706px;font-size:14.67px;line-height:17px;color:#000"><span style="letter-spacing:-0.35px">52</span></div><div class="t" style="left:476px;top:706px;font-size:14.67px;line-height:17px;color:#000">值过高<span style="letter-spacing:-0.35px">@Demo_W7.1001.D3.</span>二通阀给定<span style="letter-spacing:-0.35px">:52</span></div><div class="t" style="left:909px;top:706px;width:135px;text-align:right;font-size:14.67px;line-height:17px;color:#000;letter-spacing:0.28px">2023-11-25 15:29</div><div class="t" style="left:0;top:725px;width:28px;text-align:center;font-size:14.67px;line-height:17px;color:#000;color:#262626">39</div><div class="t" style="left:31px;top:725px;font-size:14.67px;line-height:17px;color:#000"><span style="letter-spacing:-0.35px">X2View</span></div><div class="t" style="left:103px;top:725px;font-size:14.67px;line-height:17px;color:#000"><span style="letter-spacing:-0.35px">Demo_W7.1001.D3.</span>二通阀给定</div><div class="t" style="left:332px;top:725px;font-size:14.67px;line-height:17px;color:#000">值过高</div><div class="t" style="left:404px;top:725px;font-size:14.67px;line-height:17px;color:#000"><span style="letter-spacing:-0.35px">83</span></div><div class="t" style="left:476px;top:725px;font-size:14.67px;line-height:17px;color:#000">值过高<span style="letter-spacing:-0.35px">@Demo_W7.1001.D3.</span>二通阀给定<span style="letter-spacing:-0.35px">:83</span></div><div class="t" style="left:909px;top:725px;width:135px;text-align:right;font-size:14.67px;line-height:17px;color:#000;letter-spacing:0.28px">2023-11-25 15:29</div><div class="t" style="left:0;top:744px;width:28px;text-align:center;font-size:14.67px;line-height:17px;color:#000;color:#262626">40</div><div class="t" style="left:31px;top:744px;font-size:14.67px;line-height:17px;color:#000"><span style="letter-spacing:-0.35px">X2View</span></div><div class="t" style="left:103px;top:744px;font-size:14.67px;line-height:17px;color:#000"><span style="letter-spacing:-0.35px">Demo_W7.1001.D3.</span>二通阀给定</div><div class="t" style="left:332px;top:744px;font-size:14.67px;line-height:17px;color:#000">值过高</div><div class="t" style="left:404px;top:744px;font-size:14.67px;line-height:17px;color:#000"><span style="letter-spacing:-0.35px">53</span></div><div class="t" style="left:476px;top:744px;font-size:14.67px;line-height:17px;color:#000">值过高<span style="letter-spacing:-0.35px">@Demo_W7.1001.D3.</span>二通阀给定<span style="letter-spacing:-0.35px">:53</span></div><div class="t" style="left:909px;top:744px;width:135px;text-align:right;font-size:14.67px;line-height:17px;color:#000;letter-spacing:0.28px">2023-11-25 15:29</div><div class="t" style="left:0;top:763px;width:28px;text-align:center;font-size:14.67px;line-height:17px;color:#000;color:#262626">41</div><div class="t" style="left:31px;top:763px;font-size:14.67px;line-height:17px;color:#000"><span style="letter-spacing:-0.35px">X2View</span></div><div class="t" style="left:103px;top:763px;font-size:14.67px;line-height:17px;color:#000"><span style="letter-spacing:-0.35px">Demo_W7.1001.D3.</span>二通阀给定</div><div class="t" style="left:332px;top:763px;font-size:14.67px;line-height:17px;color:#000">值过高</div><div class="t" style="left:404px;top:763px;font-size:14.67px;line-height:17px;color:#000"><span style="letter-spacing:-0.35px">98</span></div><div class="t" style="left:476px;top:763px;font-size:14.67px;line-height:17px;color:#000">值过高<span style="letter-spacing:-0.35px">@Demo_W7.1001.D3.</span>二通阀给定<span style="letter-spacing:-0.35px">:98</span></div><div class="t" style="left:909px;top:763px;width:135px;text-align:right;font-size:14.67px;line-height:17px;color:#000;letter-spacing:0.28px">2023-11-25 15:29</div><div class="t" style="left:0;top:782px;width:28px;text-align:center;font-size:14.67px;line-height:17px;color:#000;color:#262626">42</div><div class="t" style="left:31px;top:782px;font-size:14.67px;line-height:17px;color:#000"><span style="letter-spacing:-0.35px">X2View</span></div><div class="t" style="left:103px;top:782px;font-size:14.67px;line-height:17px;color:#000"><span style="letter-spacing:-0.35px">Demo_W7.1001.D3.</span>二通阀给定</div><div class="t" style="left:332px;top:782px;font-size:14.67px;line-height:17px;color:#000">值过高</div><div class="t" style="left:404px;top:782px;font-size:14.67px;line-height:17px;color:#000"><span style="letter-spacing:-0.35px">76</span></div><div class="t" style="left:476px;top:782px;font-size:14.67px;line-height:17px;color:#000">值过高<span style="letter-spacing:-0.35px">@Demo_W7.1001.D3.</span>二通阀给定<span style="letter-spacing:-0.35px">:76</span></div><div class="t" style="left:909px;top:782px;width:135px;text-align:right;font-size:14.67px;line-height:17px;color:#000;letter-spacing:0.28px">2023-11-25 15:29</div><div class="t" style="left:0;top:801px;width:28px;text-align:center;font-size:14.67px;line-height:17px;color:#000;color:#262626">43</div><div class="t" style="left:31px;top:801px;font-size:14.67px;line-height:17px;color:#000"><span style="letter-spacing:-0.35px">X2View</span></div><div class="t" style="left:103px;top:801px;font-size:14.67px;line-height:17px;color:#000"><span style="letter-spacing:-0.35px">Demo_W7.1001.D3.</span>二通阀给定</div><div class="t" style="left:332px;top:801px;font-size:14.67px;line-height:17px;color:#000">值过高</div><div class="t" style="left:404px;top:801px;font-size:14.67px;line-height:17px;color:#000"><span style="letter-spacing:-0.35px">72</span></div><div class="t" style="left:476px;top:801px;font-size:14.67px;line-height:17px;color:#000">值过高<span style="letter-spacing:-0.35px">@Demo_W7.1001.D3.</span>二通阀给定<span style="letter-spacing:-0.35px">:72</span></div><div class="t" style="left:909px;top:801px;width:135px;text-align:right;font-size:14.67px;line-height:17px;color:#000;letter-spacing:0.28px">2023-11-25 15:29</div></div>
<div class="a" style="left:1405px;top:499px;width:75px;height:22px;border:2px solid #107c41"></div>
<div class="a" style="left:1475px;top:516px;width:6px;height:6px;background:#107c41;border:1px solid #fff"></div>
<div class="a" style="left:1899px;top:159px;width:21px;height:823px;background:linear-gradient(90deg,#f0f0f0 0%,#e4e4e4 40%,#e9e9e9 100%)"></div>
<div class="a" style="left:1780px;top:178px;width:118px;height:300px;background:radial-gradient(ellipse 100px 140px at 140px 60px,rgba(0,0,0,0.045),rgba(0,0,0,0) 100%)"></div>
<div class="a" style="left:1916px;top:190px;width:8px;height:70px;background:#fff;border:1px solid #d8d8d8;border-radius:6px"></div>
<div class="a" style="left:1902px;top:161px;width:15px;height:15px;background:#fff;border:1px solid #8a8a8a"></div>
<svg style="left:1905px;top:166px" width="8" height="4"><path d="M0 4L4 0 8 4z" fill="#222"/></svg>
<div class="a" style="left:1902px;top:176px;width:15px;height:17px;background:#fff;border:1px solid #8a8a8a"></div>
<div class="a" style="left:1902px;top:967px;width:15px;height:15px;background:#fff;border:1px solid #8a8a8a"></div>
<svg style="left:1905px;top:973px" width="8" height="4"><path d="M0 0h8L4 4z" fill="#222"/></svg>
<div class="a" style="left:0;top:982px;width:1920px;height:28px;background:#e6e6e6;border-top:1px solid #9e9e9e"></div>
<svg style="left:26px;top:991px" width="5" height="9"><path d="M4.5 0v9L0 4.5z" fill="#bdbdbd"/></svg>
<svg style="left:56px;top:991px" width="5" height="9"><path d="M0 0v9l4.5-4.5z" fill="#bdbdbd"/></svg>
<div class="a" style="left:100px;top:982px;width:222px;height:25px;background:#fff;border-left:1px solid #9e9e9e;border-right:1px solid #9e9e9e;border-bottom:3px solid #217346"></div>
<div class="t" style="left:111px;top:986px;font-size:14px;line-height:16px;letter-spacing:0.2px;color:#217346">报警记录_2023-11-25 16-21-24</div>
<svg style="left:354px;top:987px" width="18" height="18" viewBox="0 0 18 18"><circle cx="9" cy="9" r="7.5" fill="none" stroke="#777" stroke-width="1.2"/><path d="M9 4.5v9M4.5 9h9" stroke="#666" stroke-width="1.6"/></svg>
<div class="a" style="left:1152px;top:990px;width:2px;height:2px;background:#aaa"></div><div class="a" style="left:1152px;top:995px;width:2px;height:2px;background:#aaa"></div><div class="a" style="left:1152px;top:1000px;width:2px;height:2px;background:#aaa"></div>
<div class="a" style="left:1169px;top:989px;width:729px;height:15px;background:#f0f0f0"></div>
<div class="a" style="left:1169px;top:989px;width:15px;height:15px;background:#fff;border:1px solid #8a8a8a"></div>
<svg style="left:1174px;top:992px" width="4" height="8"><path d="M4 0v8L0 4z" fill="#222"/></svg>
<div class="a" style="left:1184px;top:989px;width:658px;height:15px;background:#fff;border:1px solid #8a8a8a"></div>
<div class="a" style="left:1884px;top:989px;width:15px;height:15px;background:#fff;border:1px solid #8a8a8a"></div>
<svg style="left:1890px;top:992px" width="4" height="8"><path d="M0 0v8l4-4z" fill="#222"/></svg>
<div class="a" style="left:0;top:1010px;width:1920px;height:22px;background:#f3f3f3;border-top:1px solid #d5d5d5"></div>
<div class="t" style="left:7px;top:1014px;color:#333">就绪</div>
<div class="t" style="left:47px;top:1014px;color:#333">循环引用</div>
<svg style="left:114px;top:1014px" width="17" height="15" viewBox="0 0 17 15"><path d="M5 2.5A5 5 0 1 0 9 11" fill="none" stroke="#555" stroke-width="1.2" stroke-dasharray="2 1"/><path d="M7 0v6" stroke="#555" stroke-width="1.2"/><text x="9" y="14" font-size="10" font-weight="bold" fill="#555" font-family="Liberation Sans">?</text></svg>
<div class="t" style="left:133px;top:1014px;color:#333">辅助功能: 不可用</div>
<div class="a" style="left:1615px;top:1011px;width:40px;height:21px;background:#c6c6c6"></div>
<svg style="left:1628px;top:1014px" width="14" height="14" viewBox="0 0 14 14"><path d="M0.5 0.5h13v13h-13zM0.5 5h13M0.5 9.5h13M5 0.5v13M9.5 0.5v13" fill="none" stroke="#555"/></svg>
<svg style="left:1668px;top:1014px" width="14" height="14" viewBox="0 0 14 14"><rect x="0.5" y="0.5" width="13" height="13" fill="none" stroke="#555"/><rect x="3.5" y="3" width="7" height="8" fill="none" stroke="#555"/><path d="M5 5h4M5 7h4M5 9h4" stroke="#555"/></svg>
<svg style="left:1708px;top:1014px" width="14" height="14" viewBox="0 0 14 14"><path d="M0.5 0.5h13v13h-13zM0.5 8.5h8v-8M4.5 0.5v8" fill="none" stroke="#555"/></svg>
<div class="a" style="left:1741px;top:1020px;width:8px;height:1px;background:#444"></div>
<div class="a" style="left:1754px;top:1021px;width:100px;height:1px;background:#444"></div>
<div class="a" style="left:1802px;top:1016px;width:5px;height:11px;background:#444"></div>
<div class="a" style="left:1859px;top:1021px;width:9px;height:1px;background:#444"></div><div class="a" style="left:1863px;top:1017px;width:1px;height:9px;background:#444"></div>
<div class="t" style="left:1880px;top:1014px;color:#444;font-size:12.5px">100%</div>
<div class="a" style="left:0;top:1032px;width:1920px;height:8px;background:#cde5ed"></div>
<svg style="left:1737px;top:907px" width="184" height="61" viewBox="0 0 184 61">
<defs><linearGradient id="ig" x1="0" y1="0" x2="0" y2="1"><stop offset="0" stop-color="#0c2f72"/><stop offset="0.55" stop-color="#10357c"/><stop offset="0.8" stop-color="#153d88"/><stop offset="1" stop-color="#12357c"/></linearGradient>
<clipPath id="ic"><rect x="2" y="2" width="186" height="57" rx="28.5"/></clipPath></defs>
<rect x="1.5" y="1.5" width="190" height="58" rx="29" fill="url(#ig)" stroke="#4d7dd0" stroke-width="2.2"/>
<g clip-path="url(#ic)">
<path d="M0 46q20-4 40-1t40 0 40-2 40 1 30 0v20H0z" fill="#1e4d9e" opacity="0.45"/>
<path d="M0 52q25-3 50 0t50-1 50 1 40-1v12H0z" fill="#0d2c6a" opacity="0.6"/>
<path d="M104 28L127 12" stroke="#6ab0e8" stroke-width="0.8" opacity="0.8"/>
<path d="M175 28L190 16" stroke="#6ab0e8" stroke-width="0.8" opacity="0.8"/>
<ellipse cx="139" cy="25" rx="12" ry="17" fill="#0a1a45"/>
<path d="M134 9q12-6 18 8" fill="none" stroke="#1a7f9a" stroke-width="2" opacity="0.8"/>
<path d="M126 52q4-15 16-16 10 1 11 16z" fill="#9a72dd"/>
<path d="M131 52q3-10 10-12" fill="none" stroke="#c6a8f0" stroke-width="1"/>
<rect x="152" y="38" width="10" height="14" rx="4" fill="#d8d8e0"/>
<path d="M152 40l1-3 2 2M162 40l-1-3-2 2" fill="#d8d8e0"/>
<circle cx="99" cy="47" r="0.9" fill="#fff"/>
<circle cx="50" cy="52" r="0.7" fill="#ffe680"/><circle cx="162" cy="52" r="0.7" fill="#ffe680"/>
</g>
<path d="M111 26l1.6 3.3 3.6.4-2.7 2.5.8 3.6-3.3-1.8-3.3 1.8.8-3.6-2.7-2.5 3.6-.4z" fill="#fff46a"/>
<path d="M176 23l1.2 2.4 2.6.3-1.9 1.8.5 2.6-2.4-1.3-2.4 1.3.5-2.6-1.9-1.8 2.6-.3z" fill="#fff46a"/>
</svg>
<div class="t" style="left:1750px;top:928px;font-size:16px;line-height:17px;color:#fff46a;font-weight:bold">中</div>
<div class="t" style="left:1776px;top:926px;font-size:12px;line-height:16px;color:#fff46a;font-weight:bold">°,</div>
<svg style="left:1794px;top:929px" width="14" height="14" viewBox="0 0 14 14"><path d="M9 0.5a6.8 6.8 0 1 1-8.5 8.5 6 6 0 0 0 8.5-8.5z" fill="#fff46a"/></svg>
<svg style="left:1815px;top:931px" width="17" height="13" viewBox="0 0 17 13"><path d="M5 0.5q3.5 2.5 7 0l4.5 3-2 3-2-1v7h-8v-7l-2 1-2-3z" fill="#fff46a"/></svg>
</body></html>
